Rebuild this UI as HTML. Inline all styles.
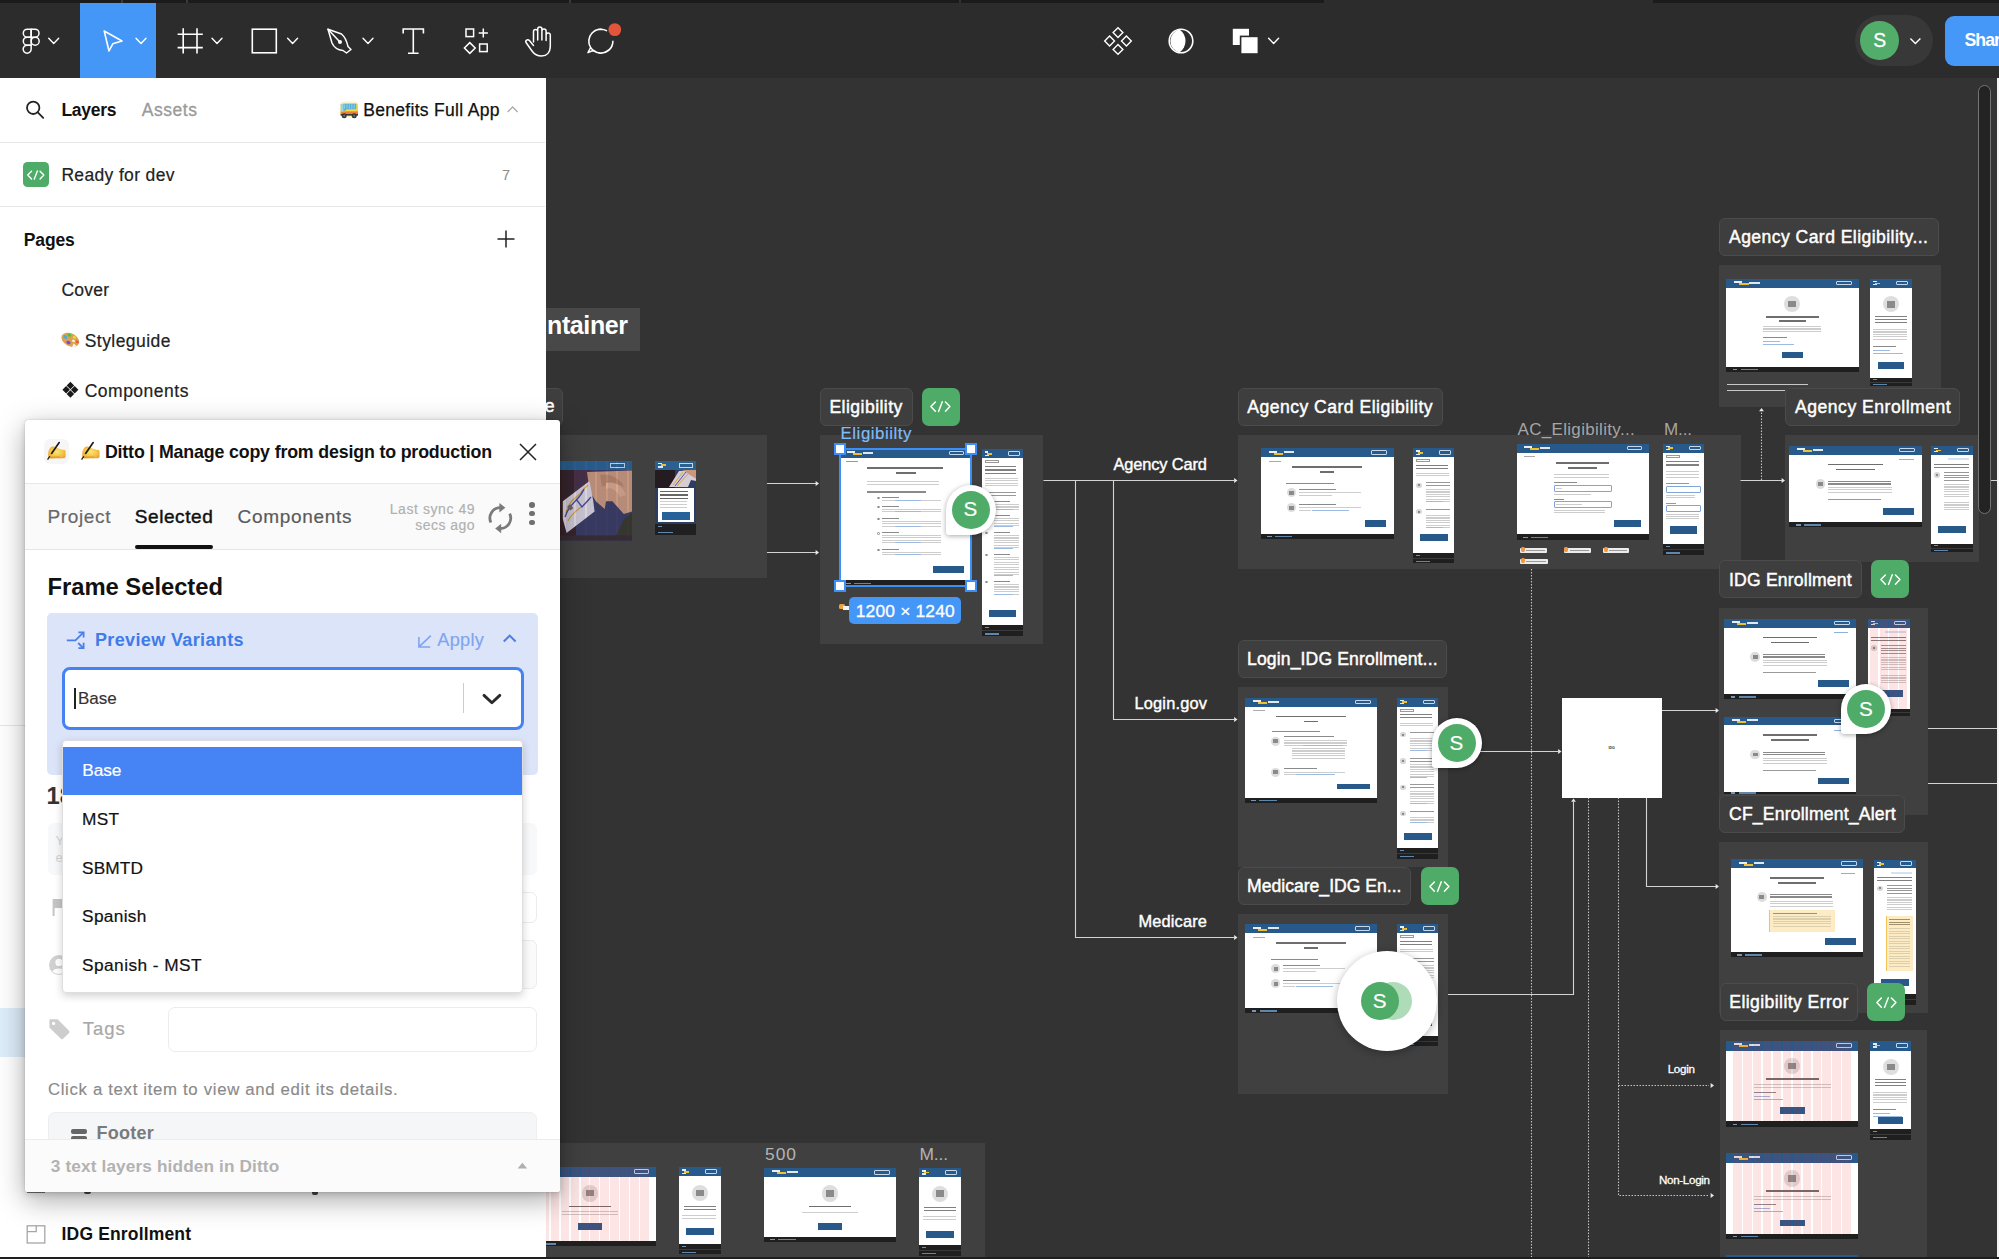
<!DOCTYPE html>
<html><head><meta charset="utf-8"><title>Figma</title><style>

*{box-sizing:border-box;margin:0;padding:0}
html,body{width:1999px;height:1259px;overflow:hidden;background:#333333}
body{font-family:"Liberation Sans",sans-serif;position:relative}
.b{position:absolute}
.t{position:absolute;white-space:nowrap;line-height:1;display:block}
svg{position:absolute;overflow:visible}

.sec{position:absolute;background:#404040}
.lab{position:absolute;height:38px;background:#3e3e3e;border:1px solid #4b4b4b;border-radius:6px}
.gb{position:absolute;width:38px;height:38px;background:#4fab68;border-radius:7px}
.th{position:absolute;background:#fff;overflow:hidden}
.th i{filter:blur(0.3px)}
.th .hd,.th .ft{filter:none}
.th i,.th b,.th u,.th s,.th em{position:absolute;display:block}
.hd{left:0;top:0;width:100%;background:#27598a}
.ft{left:0;bottom:0;width:100%;background:#1f1f1f}
.ln{background:#9a9a9a}
.av{position:absolute;border-radius:50% 50% 50% 3px;background:#fff;box-shadow:0 1px 5px rgba(0,0,0,0.35)}
.avg{position:absolute;border-radius:50%;background:#4fab68}

.lp{position:absolute;left:0;top:78.3px;width:545.6px;height:1181px;background:#fff}

.pg{position:absolute;left:25.2px;top:419.8px;width:534.8px;height:772px;background:#fff;border-radius:3px 3px 2px 2px;box-shadow:0 8px 28px rgba(0,0,0,0.34),0 2px 6px rgba(0,0,0,0.14),0 0 1px rgba(0,0,0,0.35)}
.pgc{position:absolute;left:25.2px;top:419.8px;width:534.8px;height:772px;overflow:hidden;border-radius:3px}

.tb{position:absolute;left:0;top:0;width:1999px;height:78.3px;background:#2c2c2c}
.chev{stroke:#fff;stroke-width:1.4;fill:none}

</style></head><body>
<div class="sec" style="left:540.0px;top:434.5px;width:227.0px;height:143.5px"></div>
<div class="sec" style="left:819.6px;top:434.5px;width:223.8px;height:209.5px"></div>
<div class="sec" style="left:1238.0px;top:434.5px;width:502.5px;height:134.0px"></div>
<div class="sec" style="left:1719.2px;top:265.0px;width:222.0px;height:142.0px"></div>
<div class="sec" style="left:1785.0px;top:434.5px;width:194.0px;height:127.0px"></div>
<div class="sec" style="left:1238.0px;top:686.5px;width:210.0px;height:180.5px"></div>
<div class="sec" style="left:1238.0px;top:913.5px;width:210.0px;height:180.5px"></div>
<div class="sec" style="left:1719.0px;top:608.0px;width:209.0px;height:207.0px"></div>
<div class="sec" style="left:1719.0px;top:842.0px;width:209.0px;height:170.5px"></div>
<div class="sec" style="left:1720.0px;top:1030.0px;width:207.0px;height:229.0px"></div>
<div class="sec" style="left:540.0px;top:1143.0px;width:445.0px;height:116.0px"></div>
<svg width="1999" height="1259" style="left:0;top:0"><g fill="none" stroke="#d4d4d4" stroke-width="1.1"><path d="M767 483.5 H816 M767 552.5 H816"/><path d="M1043.5 480.5 H1234 M1075.5 480.5 V937.5 H1234 M1113.5 480.5 V719.5 H1234"/><path d="M1438 751.5 H1558"/><path d="M1662 710.5 H1716"/><path d="M1448 994.5 H1573.5 V802"/><path d="M1646.5 797.5 V886.5 H1716"/><path d="M1740.5 480.5 H1782"/><path d="M1928 728.5 H1999 M1928 783.5 H1999 M1979 480.5 H1999"/></g><g fill="none" stroke="#c4c4c4" stroke-width="1.1" stroke-dasharray="1.5 1.5"><path d="M1531.5 569 V1259 M1588.5 797.5 V1259 M1618.5 797.5 V1195.5 H1709 M1618.5 1085.5 H1709 M1761.5 480 V412"/></g><path d="M819 483.5 l-3.36 -2.4 v4.8 Z" fill="#e8e8e8" stroke="none"/><path d="M819 552.5 l-3.36 -2.4 v4.8 Z" fill="#e8e8e8" stroke="none"/><path d="M1237.5 480.5 l-3.36 -2.4 v4.8 Z" fill="#e8e8e8" stroke="none"/><path d="M1237.5 937.5 l-3.36 -2.4 v4.8 Z" fill="#e8e8e8" stroke="none"/><path d="M1237.5 719.5 l-3.36 -2.4 v4.8 Z" fill="#e8e8e8" stroke="none"/><path d="M1561.5 751.5 l-3.36 -2.4 v4.8 Z" fill="#e8e8e8" stroke="none"/><path d="M1719 710.5 l-3.36 -2.4 v4.8 Z" fill="#e8e8e8" stroke="none"/><path d="M1573.5 798.5 l-2.4 3.36 h4.8 Z" fill="#e8e8e8" stroke="none"/><path d="M1719 886.5 l-3.36 -2.4 v4.8 Z" fill="#e8e8e8" stroke="none"/><path d="M1785 480.5 l-3.36 -2.4 v4.8 Z" fill="#e8e8e8" stroke="none"/><path d="M1714 1085.5 l-3.36 -2.4 v4.8 Z" fill="#e8e8e8" stroke="none"/><path d="M1714 1195.5 l-3.36 -2.4 v4.8 Z" fill="#e8e8e8" stroke="none"/><path d="M1761.5 408 l-2.4 3.36 h4.8 Z" fill="#e8e8e8" stroke="none"/></svg>
<div class="b" style="left:540.00px;top:308.00px;width:100.40px;height:42.60px;background:#484848;"></div>
<span class="t" style="left:547.00px;top:313px;font-size:25px;color:#fff;font-weight:700;letter-spacing:-0.392px;">ntainer</span>
<div class="lab" style="left:520px;top:387.6px;width:42.6px"></div>
<span class="t" style="left:544.80px;top:398px;font-size:17.6px;color:#fff;-webkit-text-stroke:0.5px #fff;">e</span>
<div class="th" style="left:560px;top:461px;width:72px;height:79.6px;background:#3c3b62"><svg width="72" height="79.6" style="left:0;top:0" viewBox="0 0 72 79.6"><rect x="0" y="9" width="16" height="66" fill="#38242a"/><path d="M14 9 H30 L26 30 L14 44 Z" fill="#4a3046"/><path d="M27 11 L72 9.5 L72 50.5 L63.8 53 L52.4 40.3 L46 40.3 L44.7 48 L35.8 40.3 L29.5 30 L28.2 20 Z" fill="#c9977c"/><path d="M40 14 C48 12 60 16 64 26 C58 22 48 22 42 26 Z" fill="#b88468"/><path d="M46 22 C54 20 62 24 66 34 L60 36 C56 28 50 26 46 28 Z" fill="#d8a88c"/><path d="M2.8 40.3 L29.5 20 L33.3 40.3 L34.6 50.5 L6.6 72 L2.8 58 Z" fill="#dcd4de"/><path d="M6 52 C10 36 20 36 22 30 L28 24" fill="none" stroke="#d9a23a" stroke-width="1.3"/><path d="M8 60 C14 48 22 48 30 38" fill="none" stroke="#d9a23a" stroke-width="1.1"/><path d="M5 56 C10 40 18 42 24 28 M16 38 L22 46 L31 36" fill="none" stroke="#4a4aa0" stroke-width="1.3"/><rect x="8" y="44" width="4" height="5" fill="#7a6a5a" transform="rotate(-35 10 46)"/><path d="M64 58 L72 52 L72 75 L56 75 Z" fill="#3a382c"/><rect x="0" y="0" width="72" height="9" fill="#2b6090"/><rect x="0" y="74.4" width="72" height="5.199999999999989" fill="#3a2c2e"/></svg><i style="left:49.7px;top:2.2px;width:15.1px;height:4.6px;border:0.7px solid #c9d6e4"></i><i style="left:6px;top:0;width:72px;height:79.6px;background:repeating-linear-gradient(to right,rgba(20,40,90,0.1) 0,rgba(20,40,90,0.1) 8.2px,transparent 8.2px,transparent 10.5px)"></i></div>
<div class="th" style="left:655px;top:461px;width:41.4px;height:74px;background:#2b3d62"><svg width="41.4" height="74" style="left:0;top:0" viewBox="0 0 41.4 74"><rect x="0" y="9" width="20" height="18" fill="#241c20"/><path d="M14 26 L24 10 L40 9 L41.4 9 L41.4 20 L36 19 L33 26 Z" fill="#d6ccd4"/><path d="M28 9 H41.4 V18 L35 14 Z" fill="#c9977c"/><path d="M18 24 L28 11 M22 25 L34 12" stroke="#d9a23a" stroke-width="0.9"/><path d="M20 25 L31 11" stroke="#4a4aa0" stroke-width="0.9"/></svg><i class="hd" style="height:9px;background:#2b6090"></i><i style="left:3.4px;top:2.0px;width:3.6px;height:1.4px;background:#e8eef5"></i><i style="left:6.0px;top:3.2px;width:4.6px;height:2.0px;background:#e8c23a"></i><i style="left:3.4px;top:5.4px;width:4.4px;height:1.4px;background:#dfe7f0"></i><i style="left:24.4px;top:2.2px;width:13.4px;height:4.6px;border:0.7px solid #c9d6e4"></i><i style="left:3px;top:26.6px;width:35.8px;height:34px;background:#fff"></i><i style="left:5.4px;top:29.6px;width:27.4px;height:8.1px;background:repeating-linear-gradient(to bottom,#666 0,#666 1.5px,transparent 1.5px,transparent 3.3px)"></i><i style="left:5.4px;top:40.4px;width:26.4px;height:6.6px;background:repeating-linear-gradient(to bottom,#cdcdcd 0,#cdcdcd 1.0px,transparent 1.0px,transparent 2.8px)"></i><i style="left:7.0px;top:51.0px;width:27.8px;height:7.6px;background:#27619a"></i><i style="left:0;bottom:0;width:100%;height:11px;background:#202020"></i><i style="left:3px;bottom:7.6px;width:4px;height:1.1px;background:#6f8fb0"></i><i style="left:3px;bottom:2.2px;width:15px;height:1.1px;background:#5f86ad"></i></div>
<div class="th" style="left:839.6px;top:448.8px;width:131.4px;height:137.6px"><i class="hd" style="height:8.8px"></i><i style="left:7.9px;top:2.2px;width:7.9px;height:2.0px;background:#e8eef5"></i><i style="left:13.1px;top:4.2px;width:9.2px;height:2.0px;background:#f0c030"></i><i style="left:23.0px;top:2.8px;width:10.5px;height:2.0px;background:#dfe7f0"></i><i style="left:109.1px;top:2px;width:15.8px;height:4.4px;border:0.7px solid #c9d6e4;border-radius:1px"></i><i style="left:6.6px;top:12.2px;width:11.8px;height:0.9px;background:#999"></i><i style="left:27.6px;top:18.4px;width:76.2px;height:1.8px;background:#6e6e6e"></i><i style="left:56.5px;top:23.4px;width:19.7px;height:1.8px;background:#6e6e6e"></i><i style="left:27.6px;top:32.2px;width:72.3px;height:3.6px;background:repeating-linear-gradient(to bottom,#cdcdcd 0,#cdcdcd 1.0px,transparent 1.0px,transparent 2.6px)"></i><i style="left:27.6px;top:42.4px;width:59.1px;height:1.4px;background:#8a8a8a"></i><i style="left:37.4px;top:47.8px;width:2.6px;height:2.6px;border:0.6px solid #888;border-radius:50%"></i><i style="left:42.0px;top:48.0px;width:17.1px;height:1.1px;background:#8a8a8a"></i><i style="left:42.0px;top:51.0px;width:59.1px;height:1.0px;background:repeating-linear-gradient(to bottom,#cdcdcd 0,#cdcdcd 1.0px,transparent 1.0px,transparent 2.4px)"></i><i style="left:55.2px;top:51.0px;width:26.3px;height:1.0px;background:#9dbbe2"></i><i style="left:37.4px;top:57.1px;width:2.6px;height:2.6px;border:0.6px solid #888;border-radius:50%"></i><i style="left:42.0px;top:57.3px;width:17.1px;height:1.1px;background:#8a8a8a"></i><i style="left:42.0px;top:60.3px;width:59.1px;height:3.4px;background:repeating-linear-gradient(to bottom,#cdcdcd 0,#cdcdcd 1.0px,transparent 1.0px,transparent 2.4px)"></i><i style="left:55.2px;top:62.7px;width:26.3px;height:1.0px;background:#9dbbe2"></i><i style="left:37.4px;top:68.9px;width:2.6px;height:2.6px;border:0.6px solid #888;border-radius:50%"></i><i style="left:42.0px;top:69.1px;width:17.1px;height:1.1px;background:#8a8a8a"></i><i style="left:42.0px;top:72.1px;width:59.1px;height:5.8px;background:repeating-linear-gradient(to bottom,#cdcdcd 0,#cdcdcd 1.0px,transparent 1.0px,transparent 2.4px)"></i><i style="left:55.2px;top:76.9px;width:26.3px;height:1.0px;background:#9dbbe2"></i><i style="left:37.4px;top:83.2px;width:2.6px;height:2.6px;border:0.6px solid #888;border-radius:50%"></i><i style="left:42.0px;top:83.4px;width:17.1px;height:1.1px;background:#8a8a8a"></i><i style="left:42.0px;top:86.4px;width:59.1px;height:8.2px;background:repeating-linear-gradient(to bottom,#cdcdcd 0,#cdcdcd 1.0px,transparent 1.0px,transparent 2.4px)"></i><i style="left:55.2px;top:93.6px;width:26.3px;height:1.0px;background:#9dbbe2"></i><i style="left:37.4px;top:100.0px;width:2.6px;height:2.6px;border:0.6px solid #888;border-radius:50%"></i><i style="left:42.0px;top:100.2px;width:17.1px;height:1.1px;background:#8a8a8a"></i><i style="left:42.0px;top:103.2px;width:59.1px;height:3.4px;background:repeating-linear-gradient(to bottom,#cdcdcd 0,#cdcdcd 1.0px,transparent 1.0px,transparent 2.4px)"></i><i style="left:55.2px;top:105.6px;width:26.3px;height:1.0px;background:#9dbbe2"></i><i style="left:93.0px;top:117.6px;width:31.3px;height:6.6px;background:#27598a"></i><i class="ft" style="height:6.4px"></i><i style="left:6.6px;bottom:2.6px;width:4.6px;height:1.1px;background:#7c96b0"></i><i style="left:14.5px;bottom:2.6px;width:17.1px;height:1.1px;background:#5f86ad"></i></div>
<div class="th" style="left:981.8px;top:449.4px;width:41.4px;height:187.0px"><i class="hd" style="height:8.8px"></i><i style="left:3.0px;top:2.0px;width:3.6px;height:1.4px;background:#e8eef5"></i><i style="left:5.0px;top:3.6px;width:5.0px;height:1.6px;background:#f0c030"></i><i style="left:3.0px;top:5.2px;width:4.0px;height:1.2px;background:#dfe7f0"></i><i style="left:25.9px;top:1.8px;width:12px;height:4.6px;border:0.7px solid #c9d6e4;border-radius:1px"></i><i style="left:3px;top:10.8px;width:14px;height:3px;border:0.6px solid #999"></i><i style="left:3.0px;top:16.4px;width:31.4px;height:8.2px;background:repeating-linear-gradient(to bottom,#808080 0,#808080 1.4px,transparent 1.4px,transparent 3.4px)"></i><i style="left:3.0px;top:28.8px;width:33.4px;height:8.5px;background:repeating-linear-gradient(to bottom,#cdcdcd 0,#cdcdcd 1.0px,transparent 1.0px,transparent 2.5px)"></i><i style="left:3.0px;top:42.4px;width:31.4px;height:4.2px;background:repeating-linear-gradient(to bottom,#989898 0,#989898 1.2px,transparent 1.2px,transparent 3px)"></i><i style="left:3.4px;top:50.8px;width:2.6px;height:2.6px;border:0.6px solid #888;border-radius:50%"></i><i style="left:12.0px;top:51.2px;width:16.6px;height:1.2px;background:#8a8a8a"></i><i style="left:12.0px;top:54.2px;width:25.4px;height:6.0px;background:repeating-linear-gradient(to bottom,#cdcdcd 0,#cdcdcd 1.0px,transparent 1.0px,transparent 2.5px)"></i><i style="left:12.0px;top:59.2px;width:19.4px;height:1.0px;background:#9dbbe2"></i><i style="left:3.4px;top:65.3px;width:2.6px;height:2.6px;border:0.6px solid #888;border-radius:50%"></i><i style="left:12.0px;top:65.7px;width:16.6px;height:1.2px;background:#8a8a8a"></i><i style="left:12.0px;top:68.7px;width:25.4px;height:8.5px;background:repeating-linear-gradient(to bottom,#cdcdcd 0,#cdcdcd 1.0px,transparent 1.0px,transparent 2.5px)"></i><i style="left:12.0px;top:76.2px;width:19.4px;height:1.0px;background:#9dbbe2"></i><i style="left:3.4px;top:82.3px;width:2.6px;height:2.6px;border:0.6px solid #888;border-radius:50%"></i><i style="left:12.0px;top:82.7px;width:16.6px;height:1.2px;background:#8a8a8a"></i><i style="left:12.0px;top:85.7px;width:25.4px;height:13.5px;background:repeating-linear-gradient(to bottom,#cdcdcd 0,#cdcdcd 1.0px,transparent 1.0px,transparent 2.5px)"></i><i style="left:12.0px;top:98.2px;width:19.4px;height:1.0px;background:#9dbbe2"></i><i style="left:3.4px;top:104.3px;width:2.6px;height:2.6px;border:0.6px solid #888;border-radius:50%"></i><i style="left:12.0px;top:104.7px;width:16.6px;height:1.2px;background:#8a8a8a"></i><i style="left:12.0px;top:107.7px;width:25.4px;height:18.5px;background:repeating-linear-gradient(to bottom,#cdcdcd 0,#cdcdcd 1.0px,transparent 1.0px,transparent 2.5px)"></i><i style="left:12.0px;top:125.2px;width:19.4px;height:1.0px;background:#9dbbe2"></i><i style="left:3.4px;top:131.3px;width:2.6px;height:2.6px;border:0.6px solid #888;border-radius:50%"></i><i style="left:12.0px;top:131.7px;width:16.6px;height:1.2px;background:#8a8a8a"></i><i style="left:12.0px;top:134.7px;width:25.4px;height:11.0px;background:repeating-linear-gradient(to bottom,#cdcdcd 0,#cdcdcd 1.0px,transparent 1.0px,transparent 2.5px)"></i><i style="left:12.0px;top:144.7px;width:19.4px;height:1.0px;background:#9dbbe2"></i><i style="left:7.0px;top:160.6px;width:27.4px;height:7.0px;background:#27598a"></i><i class="ft" style="height:11.4px;background:#3a3a3a"></i><i style="left:0;bottom:6.4px;width:100%;height:5.0px;background:#1f1f1f"></i><i style="left:0;bottom:0;width:100%;height:5.0px;background:#1f1f1f"></i><i style="left:3px;bottom:8.3px;width:4px;height:1.1px;background:#6f8fb0"></i><i style="left:3px;bottom:1.9px;width:14px;height:1.1px;background:#5f86ad"></i></div>
<div class="th" style="left:1260.5px;top:448.4px;width:133.0px;height:90.4px"><i class="hd" style="height:8.8px"></i><i style="left:8.0px;top:2.2px;width:8.0px;height:2.0px;background:#e8eef5"></i><i style="left:13.3px;top:4.2px;width:9.3px;height:2.0px;background:#f0c030"></i><i style="left:23.3px;top:2.8px;width:10.6px;height:2.0px;background:#dfe7f0"></i><i style="left:110.4px;top:2px;width:16.0px;height:4.4px;border:0.7px solid #c9d6e4;border-radius:1px"></i><i style="left:8.0px;top:12.2px;width:12.0px;height:0.9px;background:#aaa"></i><i style="left:31.5px;top:18.0px;width:70.0px;height:1.7px;background:#6e6e6e"></i><i style="left:59.3px;top:22.8px;width:14.0px;height:1.7px;background:#6e6e6e"></i><i style="left:25.7px;top:34.4px;width:47.5px;height:1.2px;background:#8a8a8a"></i><i style="left:26.4px;top:39.8px;width:9.2px;height:9.2px;border-radius:50%;background:#dcdcdc"></i><i style="left:28.7px;top:42.6px;width:4.6px;height:3.7px;background:#8a8a8a"></i><i style="left:38.3px;top:40.4px;width:37.2px;height:1.2px;background:#8a8a8a"></i><i style="left:38.3px;top:44.0px;width:62.5px;height:1.0px;background:#cdcdcd"></i><i style="left:38.3px;top:47.0px;width:33.2px;height:1.0px;background:#cdcdcd"></i><i style="left:26.4px;top:54.8px;width:9.2px;height:9.2px;border-radius:50%;background:#dcdcdc"></i><i style="left:28.7px;top:57.6px;width:4.6px;height:3.7px;background:#8a8a8a"></i><i style="left:38.3px;top:55.4px;width:37.2px;height:1.2px;background:#8a8a8a"></i><i style="left:38.3px;top:59.0px;width:62.5px;height:1.0px;background:#cdcdcd"></i><i style="left:38.3px;top:62.0px;width:12.0px;height:1.0px;background:#cdcdcd"></i><i style="left:51.2px;top:62.0px;width:37.2px;height:1.0px;background:#9dbbe2"></i><i style="left:104.5px;top:71.2px;width:21.0px;height:7.0px;background:#27598a"></i><i class="ft" style="height:5px"></i><i style="left:6.7px;bottom:1.9px;width:4.7px;height:1.1px;background:#7c96b0"></i><i style="left:14.6px;bottom:1.9px;width:17.3px;height:1.1px;background:#5f86ad"></i></div>
<div class="th" style="left:1413.0px;top:448.4px;width:41.4px;height:115.0px"><i class="hd" style="height:8.8px"></i><i style="left:3.0px;top:2.0px;width:3.6px;height:1.4px;background:#e8eef5"></i><i style="left:5.0px;top:3.6px;width:5.0px;height:1.6px;background:#f0c030"></i><i style="left:3.0px;top:5.2px;width:4.0px;height:1.2px;background:#dfe7f0"></i><i style="left:25.9px;top:1.8px;width:12px;height:4.6px;border:0.7px solid #c9d6e4;border-radius:1px"></i><i style="left:3px;top:10.8px;width:14px;height:3px;border:0.6px solid #999"></i><i style="left:3.0px;top:16.4px;width:32.4px;height:4.5px;background:repeating-linear-gradient(to bottom,#808080 0,#808080 1.3px,transparent 1.3px,transparent 3.2px)"></i><i style="left:3.0px;top:24.8px;width:33.4px;height:3.4px;background:repeating-linear-gradient(to bottom,#cdcdcd 0,#cdcdcd 1.0px,transparent 1.0px,transparent 2.4px)"></i><i style="left:3.4px;top:34.2px;width:5.2px;height:5.2px;border-radius:50%;background:#d8d8d8"></i><i style="left:4.7px;top:35.8px;width:2.6px;height:2.1px;background:#8a8a8a"></i><i style="left:12.5px;top:33.8px;width:24.4px;height:3.7px;background:repeating-linear-gradient(to bottom,#989898 0,#989898 1.1px,transparent 1.1px,transparent 2.6px)"></i><i style="left:12.5px;top:40.2px;width:24.4px;height:13.5px;background:repeating-linear-gradient(to bottom,#cdcdcd 0,#cdcdcd 1.0px,transparent 1.0px,transparent 2.5px)"></i><i style="left:12.5px;top:52.7px;width:17.4px;height:1.0px;background:#9dbbe2"></i><i style="left:3.4px;top:60.6px;width:5.2px;height:5.2px;border-radius:50%;background:#d8d8d8"></i><i style="left:4.7px;top:62.2px;width:2.6px;height:2.1px;background:#8a8a8a"></i><i style="left:12.5px;top:60.2px;width:24.4px;height:3.7px;background:repeating-linear-gradient(to bottom,#989898 0,#989898 1.1px,transparent 1.1px,transparent 2.6px)"></i><i style="left:12.5px;top:66.6px;width:24.4px;height:13.5px;background:repeating-linear-gradient(to bottom,#cdcdcd 0,#cdcdcd 1.0px,transparent 1.0px,transparent 2.5px)"></i><i style="left:12.5px;top:79.1px;width:17.4px;height:1.0px;background:#9dbbe2"></i><i style="left:6.5px;top:86.0px;width:28.4px;height:7.0px;background:#27598a"></i><i class="ft" style="height:10.4px;background:#3a3a3a"></i><i style="left:0;bottom:5.8px;width:100%;height:4.6px;background:#1f1f1f"></i><i style="left:0;bottom:0;width:100%;height:4.6px;background:#1f1f1f"></i><i style="left:3px;bottom:7.5px;width:4px;height:1.1px;background:#6f8fb0"></i><i style="left:3px;bottom:1.7px;width:14px;height:1.1px;background:#5f86ad"></i></div>
<div class="th" style="left:1516.5px;top:443.8px;width:132.5px;height:96.1px"><i class="hd" style="height:9px"></i><i style="left:7.9px;top:2.2px;width:7.9px;height:2.0px;background:#e8eef5"></i><i style="left:13.2px;top:4.2px;width:9.3px;height:2.0px;background:#f0c030"></i><i style="left:23.2px;top:2.8px;width:10.6px;height:2.0px;background:#dfe7f0"></i><i style="left:110.0px;top:2px;width:15.9px;height:4.4px;border:0.7px solid #c9d6e4;border-radius:1px"></i><i style="left:7.9px;top:12.4px;width:10.6px;height:0.9px;background:#aaa"></i><i style="left:39.1px;top:18.2px;width:53.7px;height:1.7px;background:#6e6e6e"></i><i style="left:51.9px;top:23.7px;width:28.4px;height:1.7px;background:#6e6e6e"></i><i style="left:37.8px;top:30.6px;width:54.3px;height:3.9px;background:repeating-linear-gradient(to bottom,#cdcdcd 0,#cdcdcd 1.0px,transparent 1.0px,transparent 2.9px)"></i><i style="left:37.8px;top:38.7px;width:22.5px;height:1.0px;background:#8a8a8a"></i><i style="left:37.0px;top:41.7px;width:58.4px;height:6.3px;border:0.9px solid #7fa6d6;border-radius:1px"></i><i style="left:39.1px;top:44.4px;width:6.6px;height:0.9px;background:#cdcdcd"></i><i style="left:37.8px;top:50.2px;width:37.1px;height:0.9px;background:#cdcdcd"></i><i style="left:37.8px;top:54.9px;width:9.3px;height:1.0px;background:#8a8a8a"></i><i style="left:37.0px;top:57.6px;width:58.4px;height:6.7px;border:0.9px solid #7fa6d6;border-radius:1px"></i><i style="left:39.1px;top:60.5px;width:26.5px;height:0.9px;background:#cdcdcd"></i><i style="left:37.8px;top:66.2px;width:50.4px;height:2.6px;background:repeating-linear-gradient(to bottom,#cdcdcd 0,#cdcdcd 0.8px,transparent 0.8px,transparent 1.8px)"></i><i style="left:97.9px;top:76.6px;width:26.9px;height:6.8px;background:#27598a"></i><i class="ft" style="height:5.5px"></i><i style="left:6.6px;bottom:2.1px;width:4.6px;height:1.1px;background:#7c96b0"></i><i style="left:14.6px;bottom:2.1px;width:17.2px;height:1.1px;background:#5f86ad"></i></div>
<div class="th" style="left:1663.1px;top:443.8px;width:41.2px;height:111.6px"><i class="hd" style="height:9px"></i><i style="left:3.0px;top:2.0px;width:3.6px;height:1.4px;background:#e8eef5"></i><i style="left:5.0px;top:3.6px;width:5.0px;height:1.6px;background:#f0c030"></i><i style="left:3.0px;top:5.2px;width:4.0px;height:1.2px;background:#dfe7f0"></i><i style="left:25.7px;top:1.8px;width:12px;height:4.6px;border:0.7px solid #c9d6e4;border-radius:1px"></i><i style="left:3px;top:11.0px;width:14px;height:3px;border:0.6px solid #999"></i><i style="left:3.0px;top:17.6px;width:33.2px;height:4.7px;background:repeating-linear-gradient(to bottom,#808080 0,#808080 1.3px,transparent 1.3px,transparent 3.4px)"></i><i style="left:3.0px;top:27.5px;width:33.2px;height:6.8px;background:repeating-linear-gradient(to bottom,#cdcdcd 0,#cdcdcd 1.0px,transparent 1.0px,transparent 2.9px)"></i><i style="left:3.0px;top:39.6px;width:22.7px;height:1.0px;background:#989898"></i><i style="left:2.8px;top:42.6px;width:35.6px;height:6.8px;border:0.9px solid #7fa6d6;border-radius:1px"></i><i style="left:3.0px;top:51.4px;width:29.2px;height:3.0px;background:repeating-linear-gradient(to bottom,#cdcdcd 0,#cdcdcd 0.9px,transparent 0.9px,transparent 2.1px)"></i><i style="left:3.0px;top:59.0px;width:10.3px;height:1.0px;background:#989898"></i><i style="left:2.8px;top:61.2px;width:35.6px;height:6.6px;border:0.9px solid #7fa6d6;border-radius:1px"></i><i style="left:3.0px;top:70.4px;width:33.2px;height:4.7px;background:repeating-linear-gradient(to bottom,#cdcdcd 0,#cdcdcd 0.9px,transparent 0.9px,transparent 1.9px)"></i><i style="left:6.9px;top:82.7px;width:27.4px;height:7.9px;background:#27598a"></i><i class="ft" style="height:11.5px;background:#3a3a3a"></i><i style="left:0;bottom:6.4px;width:100%;height:5.1px;background:#1f1f1f"></i><i style="left:0;bottom:0;width:100%;height:5.1px;background:#1f1f1f"></i><i style="left:3px;bottom:8.4px;width:4px;height:1.1px;background:#6f8fb0"></i><i style="left:3px;bottom:1.9px;width:14px;height:1.1px;background:#5f86ad"></i></div>
<div class="b" style="left:1520.00px;top:548.20px;width:27.00px;height:5.00px;background:#ececec;border-radius:1px;"></div>
<div class="b" style="left:1520.80px;top:547.40px;width:3.80px;height:5.00px;background:#f09a3c;border-radius:40%;"></div>
<div class="b" style="left:1526.00px;top:550.10px;width:19.00px;height:1.20px;background:#9a9a9a;"></div>
<div class="b" style="left:1563.60px;top:548.20px;width:27.30px;height:5.00px;background:#ececec;border-radius:1px;"></div>
<div class="b" style="left:1564.40px;top:547.40px;width:3.80px;height:5.00px;background:#f09a3c;border-radius:40%;"></div>
<div class="b" style="left:1569.60px;top:550.10px;width:19.30px;height:1.20px;background:#9a9a9a;"></div>
<div class="b" style="left:1603.20px;top:548.20px;width:25.40px;height:5.00px;background:#ececec;border-radius:1px;"></div>
<div class="b" style="left:1604.00px;top:547.40px;width:3.80px;height:5.00px;background:#f09a3c;border-radius:40%;"></div>
<div class="b" style="left:1609.20px;top:550.10px;width:17.40px;height:1.20px;background:#9a9a9a;"></div>
<div class="b" style="left:1520.00px;top:559.00px;width:28.00px;height:5.00px;background:#ececec;border-radius:1px;"></div>
<div class="b" style="left:1520.80px;top:558.20px;width:3.80px;height:5.00px;background:#f09a3c;border-radius:40%;"></div>
<div class="b" style="left:1526.00px;top:560.90px;width:20.00px;height:1.20px;background:#9a9a9a;"></div>
<div class="th" style="left:1726.0px;top:279.0px;width:132.6px;height:92.6px"><i class="hd" style="height:8.8px"></i><i style="left:8.0px;top:2.2px;width:8.0px;height:2.0px;background:#e8eef5"></i><i style="left:13.3px;top:4.2px;width:9.3px;height:2.0px;background:#f0c030"></i><i style="left:23.2px;top:2.8px;width:10.6px;height:2.0px;background:#dfe7f0"></i><i style="left:110.1px;top:2px;width:15.9px;height:4.4px;border:0.7px solid #c9d6e4;border-radius:1px"></i><i style="left:58.1px;top:17.0px;width:16.4px;height:16.4px;border-radius:50%;background:#dedede"></i><i style="left:62.2px;top:21.9px;width:8.2px;height:6.6px;background:#8a8a8a"></i><i style="left:39.8px;top:37.2px;width:53.0px;height:1.5px;background:#6e6e6e"></i><i style="left:53.0px;top:41.2px;width:26.5px;height:1.5px;background:#6e6e6e"></i><i style="left:37.1px;top:47.2px;width:58.3px;height:6.0px;background:repeating-linear-gradient(to bottom,#cdcdcd 0,#cdcdcd 1.0px,transparent 1.0px,transparent 2.5px)"></i><i style="left:37.1px;top:58.2px;width:23.9px;height:1.1px;background:#8a8a8a"></i><i style="left:37.1px;top:61.6px;width:17.2px;height:1.1px;background:#9dbbe2"></i><i style="left:37.1px;top:64.8px;width:30.5px;height:1.1px;background:#9dbbe2"></i><i style="left:55.7px;top:73.2px;width:21.2px;height:6.2px;background:#27598a"></i><i class="ft" style="height:5px"></i><i style="left:6.6px;bottom:1.9px;width:4.6px;height:1.1px;background:#7c96b0"></i><i style="left:14.6px;bottom:1.9px;width:17.2px;height:1.1px;background:#5f86ad"></i></div>
<div class="th" style="left:1870.0px;top:279.0px;width:41.8px;height:107.4px"><i class="hd" style="height:8.8px"></i><i style="left:3.0px;top:2.0px;width:3.6px;height:1.4px;background:#e8eef5"></i><i style="left:5.0px;top:3.6px;width:5.0px;height:1.6px;background:#f0c030"></i><i style="left:3.0px;top:5.2px;width:4.0px;height:1.2px;background:#dfe7f0"></i><i style="left:26.3px;top:1.8px;width:12px;height:4.6px;border:0.7px solid #c9d6e4;border-radius:1px"></i><i style="left:12.9px;top:17.4px;width:16.0px;height:16.0px;border-radius:50%;background:#dedede"></i><i style="left:16.9px;top:22.2px;width:8.0px;height:6.4px;background:#8a8a8a"></i><i style="left:5.0px;top:37.0px;width:31.8px;height:7.5px;background:repeating-linear-gradient(to bottom,#808080 0,#808080 1.3px,transparent 1.3px,transparent 3.1px)"></i><i style="left:3.4px;top:50.4px;width:33.8px;height:11.0px;background:repeating-linear-gradient(to bottom,#cdcdcd 0,#cdcdcd 1.0px,transparent 1.0px,transparent 2.5px)"></i><i style="left:3.4px;top:67.4px;width:23.0px;height:1.1px;background:#8a8a8a"></i><i style="left:3.4px;top:70.8px;width:16.7px;height:1.1px;background:#9dbbe2"></i><i style="left:3.4px;top:74.2px;width:29.3px;height:1.1px;background:#9dbbe2"></i><i style="left:8.0px;top:82.6px;width:25.8px;height:7.0px;background:#27598a"></i><i class="ft" style="height:8.6px;background:#3a3a3a"></i><i style="left:0;bottom:4.8px;width:100%;height:3.8px;background:#1f1f1f"></i><i style="left:0;bottom:0;width:100%;height:3.8px;background:#1f1f1f"></i><i style="left:3px;bottom:6.1px;width:4px;height:1.1px;background:#6f8fb0"></i><i style="left:3px;bottom:1.3px;width:14px;height:1.1px;background:#5f86ad"></i></div>
<div class="b" style="left:1727.40px;top:383.60px;width:81.00px;height:1.60px;background:#c8c8c8;"></div>
<div class="b" style="left:1727.40px;top:389.60px;width:58.00px;height:1.60px;background:#c8c8c8;"></div>
<div class="th" style="left:1789.4px;top:446.0px;width:132.6px;height:81.4px"><i class="hd" style="height:8.8px"></i><i style="left:8.0px;top:2.2px;width:8.0px;height:2.0px;background:#e8eef5"></i><i style="left:13.3px;top:4.2px;width:9.3px;height:2.0px;background:#f0c030"></i><i style="left:23.2px;top:2.8px;width:10.6px;height:2.0px;background:#dfe7f0"></i><i style="left:110.1px;top:2px;width:15.9px;height:4.4px;border:0.7px solid #c9d6e4;border-radius:1px"></i><i style="left:110.1px;top:13.2px;width:14.6px;height:0.9px;background:#8fb0dd"></i><i style="left:39.1px;top:17.8px;width:54.4px;height:1.7px;background:#6e6e6e"></i><i style="left:47.1px;top:22.8px;width:38.5px;height:1.7px;background:#6e6e6e"></i><i style="left:26.3px;top:33.1px;width:9.8px;height:9.8px;border-radius:50%;background:#dcdcdc"></i><i style="left:28.7px;top:36.0px;width:4.9px;height:3.9px;background:#8a8a8a"></i><i style="left:39.1px;top:35.0px;width:62.3px;height:3.6px;background:repeating-linear-gradient(to bottom,#8a8a8a 0,#8a8a8a 1.2px,transparent 1.2px,transparent 2.4px)"></i><i style="left:39.1px;top:41.4px;width:63.6px;height:5.8px;background:repeating-linear-gradient(to bottom,#cdcdcd 0,#cdcdcd 1.0px,transparent 1.0px,transparent 2.4px)"></i><i style="left:39.1px;top:53.2px;width:53.0px;height:1.0px;background:#999"></i><i style="left:94.0px;top:62.4px;width:30.9px;height:6.7px;background:#27598a"></i><i class="ft" style="height:5px"></i><i style="left:6.6px;bottom:1.9px;width:4.6px;height:1.1px;background:#7c96b0"></i><i style="left:14.6px;bottom:1.9px;width:17.2px;height:1.1px;background:#5f86ad"></i></div>
<div class="th" style="left:1931.0px;top:446.0px;width:41.8px;height:106.4px"><i class="hd" style="height:8.8px"></i><i style="left:3.0px;top:2.0px;width:3.6px;height:1.4px;background:#e8eef5"></i><i style="left:5.0px;top:3.6px;width:5.0px;height:1.6px;background:#f0c030"></i><i style="left:3.0px;top:5.2px;width:4.0px;height:1.2px;background:#dfe7f0"></i><i style="left:26.3px;top:1.8px;width:12px;height:4.6px;border:0.7px solid #c9d6e4;border-radius:1px"></i><i style="left:16.7px;top:12.0px;width:21.7px;height:2.4px;background:#d5e2f2"></i><i style="left:3.0px;top:17.8px;width:34.8px;height:4.5px;background:repeating-linear-gradient(to bottom,#808080 0,#808080 1.3px,transparent 1.3px,transparent 3.2px)"></i><i style="left:3.2px;top:26.0px;width:5.6px;height:5.6px;border-radius:50%;background:#d8d8d8"></i><i style="left:4.6px;top:27.7px;width:2.8px;height:2.2px;background:#8a8a8a"></i><i style="left:12.5px;top:25.8px;width:25.8px;height:8.9px;background:repeating-linear-gradient(to bottom,#989898 0,#989898 1.1px,transparent 1.1px,transparent 2.6px)"></i><i style="left:12.5px;top:37.8px;width:25.8px;height:13.5px;background:repeating-linear-gradient(to bottom,#cdcdcd 0,#cdcdcd 1.0px,transparent 1.0px,transparent 2.5px)"></i><i style="left:12.5px;top:55.8px;width:25.8px;height:8.5px;background:repeating-linear-gradient(to bottom,#cdcdcd 0,#cdcdcd 1.0px,transparent 1.0px,transparent 2.5px)"></i><i style="left:7.0px;top:80.0px;width:27.8px;height:7.0px;background:#27598a"></i><i class="ft" style="height:8.6px;background:#3a3a3a"></i><i style="left:0;bottom:4.8px;width:100%;height:3.8px;background:#1f1f1f"></i><i style="left:0;bottom:0;width:100%;height:3.8px;background:#1f1f1f"></i><i style="left:3px;bottom:6.1px;width:4px;height:1.1px;background:#6f8fb0"></i><i style="left:3px;bottom:1.3px;width:14px;height:1.1px;background:#5f86ad"></i></div>
<div class="th" style="left:1244.8px;top:697.8px;width:132.4px;height:104.8px"><i class="hd" style="height:8.8px"></i><i style="left:7.9px;top:2.2px;width:7.9px;height:2.0px;background:#e8eef5"></i><i style="left:13.2px;top:4.2px;width:9.3px;height:2.0px;background:#f0c030"></i><i style="left:23.2px;top:2.8px;width:10.6px;height:2.0px;background:#dfe7f0"></i><i style="left:109.9px;top:2px;width:15.9px;height:4.4px;border:0.7px solid #c9d6e4;border-radius:1px"></i><i style="left:7.9px;top:12.2px;width:11.9px;height:0.9px;background:#aaa"></i><i style="left:31.4px;top:18.0px;width:69.6px;height:1.7px;background:#6e6e6e"></i><i style="left:59.1px;top:22.8px;width:13.9px;height:1.7px;background:#6e6e6e"></i><i style="left:27.1px;top:32.8px;width:47.7px;height:1.2px;background:#8a8a8a"></i><i style="left:26.4px;top:39.0px;width:8.8px;height:8.8px;border-radius:50%;background:#dcdcdc"></i><i style="left:28.6px;top:41.6px;width:4.4px;height:3.5px;background:#8a8a8a"></i><i style="left:39.1px;top:38.4px;width:50.3px;height:1.2px;background:#8a8a8a"></i><i style="left:39.1px;top:41.8px;width:63.6px;height:6.0px;background:repeating-linear-gradient(to bottom,#cdcdcd 0,#cdcdcd 1.0px,transparent 1.0px,transparent 2.5px)"></i><i style="left:58.3px;top:46.8px;width:39.7px;height:1.0px;background:#9dbbe2"></i><i style="left:47.7px;top:49.8px;width:53.0px;height:11.0px;background:repeating-linear-gradient(to bottom,#cdcdcd 0,#cdcdcd 1.0px,transparent 1.0px,transparent 2.5px)"></i><i style="left:26.4px;top:70.0px;width:8.8px;height:8.8px;border-radius:50%;background:#dcdcdc"></i><i style="left:28.6px;top:72.6px;width:4.4px;height:3.5px;background:#8a8a8a"></i><i style="left:39.1px;top:70.4px;width:33.1px;height:1.2px;background:#8a8a8a"></i><i style="left:39.1px;top:73.8px;width:60.9px;height:1.0px;background:#cdcdcd"></i><i style="left:39.1px;top:76.4px;width:11.9px;height:1.0px;background:#cdcdcd"></i><i style="left:51.6px;top:76.4px;width:38.4px;height:1.0px;background:#9dbbe2"></i><i style="left:92.7px;top:86.7px;width:32.3px;height:4.8px;background:#27598a"></i><i class="ft" style="height:5.1px"></i><i style="left:6.6px;bottom:1.9px;width:4.6px;height:1.1px;background:#7c96b0"></i><i style="left:14.6px;bottom:1.9px;width:17.2px;height:1.1px;background:#5f86ad"></i></div>
<div class="th" style="left:1397.1px;top:697.8px;width:41.4px;height:161.4px"><i class="hd" style="height:8.8px"></i><i style="left:3.0px;top:2.0px;width:3.6px;height:1.4px;background:#e8eef5"></i><i style="left:5.0px;top:3.6px;width:5.0px;height:1.6px;background:#f0c030"></i><i style="left:3.0px;top:5.2px;width:4.0px;height:1.2px;background:#dfe7f0"></i><i style="left:25.9px;top:1.8px;width:12px;height:4.6px;border:0.7px solid #c9d6e4;border-radius:1px"></i><i style="left:3px;top:10.8px;width:14px;height:3px;border:0.6px solid #999"></i><i style="left:3.0px;top:16.4px;width:32.4px;height:4.5px;background:repeating-linear-gradient(to bottom,#808080 0,#808080 1.3px,transparent 1.3px,transparent 3.2px)"></i><i style="left:3.0px;top:24.8px;width:33.4px;height:3.4px;background:repeating-linear-gradient(to bottom,#cdcdcd 0,#cdcdcd 1.0px,transparent 1.0px,transparent 2.4px)"></i><i style="left:3.4px;top:34.2px;width:5.2px;height:5.2px;border-radius:50%;background:#d8d8d8"></i><i style="left:4.7px;top:35.8px;width:2.6px;height:2.1px;background:#8a8a8a"></i><i style="left:12.5px;top:33.8px;width:24.4px;height:3.7px;background:repeating-linear-gradient(to bottom,#989898 0,#989898 1.1px,transparent 1.1px,transparent 2.6px)"></i><i style="left:12.5px;top:40.2px;width:24.4px;height:13.5px;background:repeating-linear-gradient(to bottom,#cdcdcd 0,#cdcdcd 1.0px,transparent 1.0px,transparent 2.5px)"></i><i style="left:12.5px;top:52.7px;width:17.4px;height:1.0px;background:#9dbbe2"></i><i style="left:3.4px;top:60.6px;width:5.2px;height:5.2px;border-radius:50%;background:#d8d8d8"></i><i style="left:4.7px;top:62.2px;width:2.6px;height:2.1px;background:#8a8a8a"></i><i style="left:12.5px;top:60.2px;width:24.4px;height:3.7px;background:repeating-linear-gradient(to bottom,#989898 0,#989898 1.1px,transparent 1.1px,transparent 2.6px)"></i><i style="left:12.5px;top:66.6px;width:24.4px;height:13.5px;background:repeating-linear-gradient(to bottom,#cdcdcd 0,#cdcdcd 1.0px,transparent 1.0px,transparent 2.5px)"></i><i style="left:12.5px;top:79.1px;width:17.4px;height:1.0px;background:#9dbbe2"></i><i style="left:3.4px;top:87.0px;width:5.2px;height:5.2px;border-radius:50%;background:#d8d8d8"></i><i style="left:4.7px;top:88.6px;width:2.6px;height:2.1px;background:#8a8a8a"></i><i style="left:12.5px;top:86.6px;width:24.4px;height:3.7px;background:repeating-linear-gradient(to bottom,#989898 0,#989898 1.1px,transparent 1.1px,transparent 2.6px)"></i><i style="left:12.5px;top:93.0px;width:24.4px;height:13.5px;background:repeating-linear-gradient(to bottom,#cdcdcd 0,#cdcdcd 1.0px,transparent 1.0px,transparent 2.5px)"></i><i style="left:12.5px;top:105.5px;width:17.4px;height:1.0px;background:#9dbbe2"></i><i style="left:3.4px;top:113.4px;width:5.2px;height:5.2px;border-radius:50%;background:#d8d8d8"></i><i style="left:4.7px;top:115.0px;width:2.6px;height:2.1px;background:#8a8a8a"></i><i style="left:12.5px;top:113.0px;width:24.4px;height:3.7px;background:repeating-linear-gradient(to bottom,#989898 0,#989898 1.1px,transparent 1.1px,transparent 2.6px)"></i><i style="left:12.5px;top:119.4px;width:24.4px;height:6.0px;background:repeating-linear-gradient(to bottom,#cdcdcd 0,#cdcdcd 1.0px,transparent 1.0px,transparent 2.5px)"></i><i style="left:12.5px;top:124.4px;width:17.4px;height:1.0px;background:#9dbbe2"></i><i style="left:6.5px;top:135.2px;width:28.4px;height:7.0px;background:#27598a"></i><i class="ft" style="height:11.3px;background:#3a3a3a"></i><i style="left:0;bottom:6.3px;width:100%;height:5.0px;background:#1f1f1f"></i><i style="left:0;bottom:0;width:100%;height:5.0px;background:#1f1f1f"></i><i style="left:3px;bottom:8.2px;width:4px;height:1.1px;background:#6f8fb0"></i><i style="left:3px;bottom:1.9px;width:14px;height:1.1px;background:#5f86ad"></i></div>
<div class="b" style="left:1562.20px;top:698.00px;width:99.60px;height:99.60px;background:#fff;"></div>
<span class="t" style="left:1608.40px;top:747px;font-size:3.6px;color:#333;font-weight:700;">IDG</span>
<div class="th" style="left:1245.0px;top:924.4px;width:132.0px;height:89.0px"><i class="hd" style="height:8.8px"></i><i style="left:7.9px;top:2.2px;width:7.9px;height:2.0px;background:#e8eef5"></i><i style="left:13.2px;top:4.2px;width:9.2px;height:2.0px;background:#f0c030"></i><i style="left:23.1px;top:2.8px;width:10.6px;height:2.0px;background:#dfe7f0"></i><i style="left:109.6px;top:2px;width:15.8px;height:4.4px;border:0.7px solid #c9d6e4;border-radius:1px"></i><i style="left:7.9px;top:12.2px;width:11.9px;height:0.9px;background:#aaa"></i><i style="left:31.3px;top:18.0px;width:69.4px;height:1.7px;background:#6e6e6e"></i><i style="left:58.9px;top:22.8px;width:13.9px;height:1.7px;background:#6e6e6e"></i><i style="left:25.5px;top:34.4px;width:47.1px;height:1.2px;background:#8a8a8a"></i><i style="left:26.2px;top:39.8px;width:9.2px;height:9.2px;border-radius:50%;background:#dcdcdc"></i><i style="left:28.5px;top:42.6px;width:4.6px;height:3.7px;background:#8a8a8a"></i><i style="left:38.0px;top:40.4px;width:37.0px;height:1.2px;background:#8a8a8a"></i><i style="left:38.0px;top:44.0px;width:62.0px;height:1.0px;background:#cdcdcd"></i><i style="left:38.0px;top:47.0px;width:33.0px;height:1.0px;background:#cdcdcd"></i><i style="left:26.2px;top:54.8px;width:9.2px;height:9.2px;border-radius:50%;background:#dcdcdc"></i><i style="left:28.5px;top:57.6px;width:4.6px;height:3.7px;background:#8a8a8a"></i><i style="left:38.0px;top:55.4px;width:37.0px;height:1.2px;background:#8a8a8a"></i><i style="left:38.0px;top:59.0px;width:62.0px;height:1.0px;background:#cdcdcd"></i><i style="left:38.0px;top:62.0px;width:11.9px;height:1.0px;background:#cdcdcd"></i><i style="left:50.8px;top:62.0px;width:37.0px;height:1.0px;background:#9dbbe2"></i><i style="left:103.8px;top:69.8px;width:20.9px;height:7.0px;background:#27598a"></i><i class="ft" style="height:5px"></i><i style="left:6.6px;bottom:1.9px;width:4.6px;height:1.1px;background:#7c96b0"></i><i style="left:14.5px;bottom:1.9px;width:17.2px;height:1.1px;background:#5f86ad"></i></div>
<div class="th" style="left:1397.0px;top:924.4px;width:41.4px;height:122.0px"><i class="hd" style="height:8.8px"></i><i style="left:3.0px;top:2.0px;width:3.6px;height:1.4px;background:#e8eef5"></i><i style="left:5.0px;top:3.6px;width:5.0px;height:1.6px;background:#f0c030"></i><i style="left:3.0px;top:5.2px;width:4.0px;height:1.2px;background:#dfe7f0"></i><i style="left:25.9px;top:1.8px;width:12px;height:4.6px;border:0.7px solid #c9d6e4;border-radius:1px"></i><i style="left:3px;top:10.8px;width:14px;height:3px;border:0.6px solid #999"></i><i style="left:3.0px;top:16.4px;width:32.4px;height:4.5px;background:repeating-linear-gradient(to bottom,#808080 0,#808080 1.3px,transparent 1.3px,transparent 3.2px)"></i><i style="left:3.0px;top:24.8px;width:33.4px;height:3.4px;background:repeating-linear-gradient(to bottom,#cdcdcd 0,#cdcdcd 1.0px,transparent 1.0px,transparent 2.4px)"></i><i style="left:3.4px;top:34.2px;width:5.2px;height:5.2px;border-radius:50%;background:#d8d8d8"></i><i style="left:4.7px;top:35.8px;width:2.6px;height:2.1px;background:#8a8a8a"></i><i style="left:12.5px;top:33.8px;width:24.4px;height:3.7px;background:repeating-linear-gradient(to bottom,#989898 0,#989898 1.1px,transparent 1.1px,transparent 2.6px)"></i><i style="left:12.5px;top:40.2px;width:24.4px;height:13.5px;background:repeating-linear-gradient(to bottom,#cdcdcd 0,#cdcdcd 1.0px,transparent 1.0px,transparent 2.5px)"></i><i style="left:12.5px;top:52.7px;width:17.4px;height:1.0px;background:#9dbbe2"></i><i style="left:3.4px;top:60.6px;width:5.2px;height:5.2px;border-radius:50%;background:#d8d8d8"></i><i style="left:4.7px;top:62.2px;width:2.6px;height:2.1px;background:#8a8a8a"></i><i style="left:12.5px;top:60.2px;width:24.4px;height:3.7px;background:repeating-linear-gradient(to bottom,#989898 0,#989898 1.1px,transparent 1.1px,transparent 2.6px)"></i><i style="left:12.5px;top:66.6px;width:24.4px;height:13.5px;background:repeating-linear-gradient(to bottom,#cdcdcd 0,#cdcdcd 1.0px,transparent 1.0px,transparent 2.5px)"></i><i style="left:12.5px;top:79.1px;width:17.4px;height:1.0px;background:#9dbbe2"></i><i style="left:3.4px;top:87.0px;width:5.2px;height:5.2px;border-radius:50%;background:#d8d8d8"></i><i style="left:4.7px;top:88.6px;width:2.6px;height:2.1px;background:#8a8a8a"></i><i style="left:12.5px;top:86.6px;width:24.4px;height:3.7px;background:repeating-linear-gradient(to bottom,#989898 0,#989898 1.1px,transparent 1.1px,transparent 2.6px)"></i><i style="left:6.5px;top:95.0px;width:28.4px;height:7.0px;background:#27598a"></i><i class="ft" style="height:10.4px;background:#3a3a3a"></i><i style="left:0;bottom:5.8px;width:100%;height:4.6px;background:#1f1f1f"></i><i style="left:0;bottom:0;width:100%;height:4.6px;background:#1f1f1f"></i><i style="left:3px;bottom:7.5px;width:4px;height:1.1px;background:#6f8fb0"></i><i style="left:3px;bottom:1.7px;width:14px;height:1.1px;background:#5f86ad"></i></div>
<div class="th" style="left:1724.0px;top:619.0px;width:132.4px;height:80.4px"><i class="hd" style="height:8.8px"></i><i style="left:7.9px;top:2.2px;width:7.9px;height:2.0px;background:#e8eef5"></i><i style="left:13.2px;top:4.2px;width:9.3px;height:2.0px;background:#f0c030"></i><i style="left:23.2px;top:2.8px;width:10.6px;height:2.0px;background:#dfe7f0"></i><i style="left:109.9px;top:2px;width:15.9px;height:4.4px;border:0.7px solid #c9d6e4;border-radius:1px"></i><i style="left:109.9px;top:13.2px;width:14.6px;height:0.9px;background:#8fb0dd"></i><i style="left:39.1px;top:17.8px;width:54.3px;height:1.7px;background:#6e6e6e"></i><i style="left:47.0px;top:22.8px;width:38.4px;height:1.7px;background:#6e6e6e"></i><i style="left:26.2px;top:33.1px;width:9.8px;height:9.8px;border-radius:50%;background:#dcdcdc"></i><i style="left:28.7px;top:36.0px;width:4.9px;height:3.9px;background:#8a8a8a"></i><i style="left:39.1px;top:35.0px;width:62.2px;height:3.6px;background:repeating-linear-gradient(to bottom,#8a8a8a 0,#8a8a8a 1.2px,transparent 1.2px,transparent 2.4px)"></i><i style="left:39.1px;top:41.4px;width:63.6px;height:5.8px;background:repeating-linear-gradient(to bottom,#cdcdcd 0,#cdcdcd 1.0px,transparent 1.0px,transparent 2.4px)"></i><i style="left:39.1px;top:53.2px;width:53.0px;height:1.0px;background:#999"></i><i style="left:93.9px;top:61.4px;width:30.8px;height:6.7px;background:#27598a"></i><i class="ft" style="height:5px"></i><i style="left:6.6px;bottom:1.9px;width:4.6px;height:1.1px;background:#7c96b0"></i><i style="left:14.6px;bottom:1.9px;width:17.2px;height:1.1px;background:#5f86ad"></i></div>
<div class="th" style="left:1868.0px;top:619.0px;width:41.8px;height:97.4px"><i class="hd" style="height:8.8px"></i><i style="left:3.0px;top:2.0px;width:3.6px;height:1.4px;background:#e8eef5"></i><i style="left:5.0px;top:3.6px;width:5.0px;height:1.6px;background:#f0c030"></i><i style="left:3.0px;top:5.2px;width:4.0px;height:1.2px;background:#dfe7f0"></i><i style="left:26.3px;top:1.8px;width:12px;height:4.6px;border:0.7px solid #c9d6e4;border-radius:1px"></i><i style="left:16.7px;top:12.0px;width:21.7px;height:2.4px;background:#d5e2f2"></i><i style="left:3.0px;top:17.8px;width:34.8px;height:4.5px;background:repeating-linear-gradient(to bottom,#808080 0,#808080 1.3px,transparent 1.3px,transparent 3.2px)"></i><i style="left:3.2px;top:26.0px;width:5.6px;height:5.6px;border-radius:50%;background:#d8d8d8"></i><i style="left:4.6px;top:27.7px;width:2.8px;height:2.2px;background:#8a8a8a"></i><i style="left:12.5px;top:25.8px;width:25.8px;height:8.9px;background:repeating-linear-gradient(to bottom,#989898 0,#989898 1.1px,transparent 1.1px,transparent 2.6px)"></i><i style="left:12.5px;top:37.8px;width:25.8px;height:13.5px;background:repeating-linear-gradient(to bottom,#cdcdcd 0,#cdcdcd 1.0px,transparent 1.0px,transparent 2.5px)"></i><i style="left:12.5px;top:55.8px;width:25.8px;height:8.5px;background:repeating-linear-gradient(to bottom,#cdcdcd 0,#cdcdcd 1.0px,transparent 1.0px,transparent 2.5px)"></i><i style="left:7.0px;top:71.0px;width:27.8px;height:7.0px;background:#27598a"></i><i style="left:2.30px;top:0px;width:37.20px;height:97.4px;background:repeating-linear-gradient(to right,rgba(235,40,40,0.12) 0,rgba(235,40,40,0.12) 8.21px,transparent 8.21px,transparent 9.66px)"></i><i class="ft" style="height:7.6px;background:#3a3a3a"></i><i style="left:0;bottom:4.3px;width:100%;height:3.3px;background:#1f1f1f"></i><i style="left:0;bottom:0;width:100%;height:3.3px;background:#1f1f1f"></i><i style="left:3px;bottom:5.3px;width:4px;height:1.1px;background:#6f8fb0"></i><i style="left:3px;bottom:1.1px;width:14px;height:1.1px;background:#5f86ad"></i></div>
<div class="th" style="left:1724.0px;top:716.6px;width:132.4px;height:77.6px"><i class="hd" style="height:8.8px"></i><i style="left:7.9px;top:2.2px;width:7.9px;height:2.0px;background:#e8eef5"></i><i style="left:13.2px;top:4.2px;width:9.3px;height:2.0px;background:#f0c030"></i><i style="left:23.2px;top:2.8px;width:10.6px;height:2.0px;background:#dfe7f0"></i><i style="left:109.9px;top:2px;width:15.9px;height:4.4px;border:0.7px solid #c9d6e4;border-radius:1px"></i><i style="left:109.9px;top:13.2px;width:14.6px;height:0.9px;background:#8fb0dd"></i><i style="left:39.1px;top:17.8px;width:54.3px;height:1.7px;background:#6e6e6e"></i><i style="left:47.0px;top:22.8px;width:38.4px;height:1.7px;background:#6e6e6e"></i><i style="left:26.2px;top:33.1px;width:9.8px;height:9.8px;border-radius:50%;background:#dcdcdc"></i><i style="left:28.7px;top:36.0px;width:4.9px;height:3.9px;background:#8a8a8a"></i><i style="left:39.1px;top:35.0px;width:62.2px;height:3.6px;background:repeating-linear-gradient(to bottom,#8a8a8a 0,#8a8a8a 1.2px,transparent 1.2px,transparent 2.4px)"></i><i style="left:39.1px;top:41.4px;width:63.6px;height:5.8px;background:repeating-linear-gradient(to bottom,#cdcdcd 0,#cdcdcd 1.0px,transparent 1.0px,transparent 2.4px)"></i><i style="left:39.1px;top:53.2px;width:53.0px;height:1.0px;background:#999"></i><i style="left:93.9px;top:61.0px;width:30.8px;height:6.7px;background:#27598a"></i><i class="ft" style="height:2.6px"></i><i style="left:6.6px;bottom:0.7px;width:4.6px;height:1.1px;background:#7c96b0"></i><i style="left:14.6px;bottom:0.7px;width:17.2px;height:1.1px;background:#5f86ad"></i></div>
<div class="th" style="left:1730.6px;top:859.4px;width:132.6px;height:98.0px"><i class="hd" style="height:8.8px"></i><i style="left:8.0px;top:2.2px;width:8.0px;height:2.0px;background:#e8eef5"></i><i style="left:13.3px;top:4.2px;width:9.3px;height:2.0px;background:#f0c030"></i><i style="left:23.2px;top:2.8px;width:10.6px;height:2.0px;background:#dfe7f0"></i><i style="left:110.1px;top:2px;width:15.9px;height:4.4px;border:0.7px solid #c9d6e4;border-radius:1px"></i><i style="left:110.1px;top:13.2px;width:14.6px;height:0.9px;background:#8fb0dd"></i><i style="left:39.1px;top:17.8px;width:54.4px;height:1.7px;background:#6e6e6e"></i><i style="left:47.1px;top:22.8px;width:38.5px;height:1.7px;background:#6e6e6e"></i><i style="left:26.3px;top:33.1px;width:9.8px;height:9.8px;border-radius:50%;background:#dcdcdc"></i><i style="left:28.7px;top:36.0px;width:4.9px;height:3.9px;background:#8a8a8a"></i><i style="left:39.1px;top:35.0px;width:62.3px;height:3.6px;background:repeating-linear-gradient(to bottom,#8a8a8a 0,#8a8a8a 1.2px,transparent 1.2px,transparent 2.4px)"></i><i style="left:39.1px;top:41.4px;width:63.6px;height:5.8px;background:repeating-linear-gradient(to bottom,#cdcdcd 0,#cdcdcd 1.0px,transparent 1.0px,transparent 2.4px)"></i><i style="left:38.5px;top:50.4px;width:66.3px;height:22.4px;background:#fdebc4;border-left:1px solid #f2c35b"></i><i style="left:42.4px;top:53.2px;width:43.8px;height:1.1px;background:#a0916a"></i><i style="left:42.4px;top:56.4px;width:58.3px;height:11.0px;background:repeating-linear-gradient(to bottom,#dccfae 0,#dccfae 1.0px,transparent 1.0px,transparent 2.5px)"></i><i style="left:94.0px;top:78.7px;width:31.0px;height:7.2px;background:#27598a"></i><i class="ft" style="height:5px"></i><i style="left:6.6px;bottom:1.9px;width:4.6px;height:1.1px;background:#7c96b0"></i><i style="left:14.6px;bottom:1.9px;width:17.2px;height:1.1px;background:#5f86ad"></i></div>
<div class="th" style="left:1874.0px;top:859.6px;width:41.6px;height:145.2px"><i class="hd" style="height:8.8px"></i><i style="left:3.0px;top:2.0px;width:3.6px;height:1.4px;background:#e8eef5"></i><i style="left:5.0px;top:3.6px;width:5.0px;height:1.6px;background:#f0c030"></i><i style="left:3.0px;top:5.2px;width:4.0px;height:1.2px;background:#dfe7f0"></i><i style="left:26.1px;top:1.8px;width:12px;height:4.6px;border:0.7px solid #c9d6e4;border-radius:1px"></i><i style="left:16.6px;top:12.0px;width:21.6px;height:2.4px;background:#d5e2f2"></i><i style="left:3.0px;top:17.8px;width:34.6px;height:4.5px;background:repeating-linear-gradient(to bottom,#808080 0,#808080 1.3px,transparent 1.3px,transparent 3.2px)"></i><i style="left:3.2px;top:26.0px;width:5.6px;height:5.6px;border-radius:50%;background:#d8d8d8"></i><i style="left:4.6px;top:27.7px;width:2.8px;height:2.2px;background:#8a8a8a"></i><i style="left:12.5px;top:25.8px;width:25.6px;height:8.9px;background:repeating-linear-gradient(to bottom,#989898 0,#989898 1.1px,transparent 1.1px,transparent 2.6px)"></i><i style="left:12.5px;top:37.8px;width:25.6px;height:13.5px;background:repeating-linear-gradient(to bottom,#cdcdcd 0,#cdcdcd 1.0px,transparent 1.0px,transparent 2.5px)"></i><i style="left:12px;top:56.8px;width:27.1px;height:54.6px;background:#fdebc4;border-left:1px solid #f2c35b"></i><i style="left:14.5px;top:59.8px;width:21.6px;height:6.4px;background:repeating-linear-gradient(to bottom,#a0916a 0,#a0916a 1.2px,transparent 1.2px,transparent 2.6px)"></i><i style="left:14.5px;top:68.8px;width:21.6px;height:38.5px;background:repeating-linear-gradient(to bottom,#dccfae 0,#dccfae 1.0px,transparent 1.0px,transparent 2.5px)"></i><i style="left:7.0px;top:119.2px;width:27.6px;height:7.0px;background:#27598a"></i><i class="ft" style="height:10.8px;background:#3a3a3a"></i><i style="left:0;bottom:6.0px;width:100%;height:4.8px;background:#1f1f1f"></i><i style="left:0;bottom:0;width:100%;height:4.8px;background:#1f1f1f"></i><i style="left:3px;bottom:7.8px;width:4px;height:1.1px;background:#6f8fb0"></i><i style="left:3px;bottom:1.8px;width:14px;height:1.1px;background:#5f86ad"></i></div>
<div class="th" style="left:1726.0px;top:1041.2px;width:132.4px;height:85.6px"><i class="hd" style="height:9.4px"></i><i style="left:7.9px;top:2.2px;width:7.9px;height:2.0px;background:#e8eef5"></i><i style="left:13.2px;top:4.2px;width:9.3px;height:2.0px;background:#f0c030"></i><i style="left:23.2px;top:2.8px;width:10.6px;height:2.0px;background:#dfe7f0"></i><i style="left:109.9px;top:2px;width:15.9px;height:4.4px;border:0.7px solid #c9d6e4;border-radius:1px"></i><i style="left:58.0px;top:16.8px;width:16.4px;height:16.4px;border-radius:50%;background:#dedede"></i><i style="left:62.1px;top:21.7px;width:8.2px;height:6.6px;background:#8a8a8a"></i><i style="left:39.7px;top:37.0px;width:53.0px;height:1.5px;background:#6e6e6e"></i><i style="left:27.8px;top:42.6px;width:76.8px;height:3.8px;background:repeating-linear-gradient(to bottom,#cdcdcd 0,#cdcdcd 1.0px,transparent 1.0px,transparent 2.8px)"></i><i style="left:27.8px;top:51.0px;width:22.5px;height:1.1px;background:#8a8a8a"></i><i style="left:27.8px;top:54.6px;width:15.9px;height:1.1px;background:#9dbbe2"></i><i style="left:27.8px;top:58.0px;width:29.1px;height:1.1px;background:#9dbbe2"></i><i style="left:53.6px;top:66.3px;width:25.2px;height:6.6px;background:#27598a"></i><i style="left:7.22px;top:0px;width:117.97px;height:85.6px;background:repeating-linear-gradient(to right,rgba(235,40,40,0.12) 0,rgba(235,40,40,0.12) 8.60px,transparent 8.60px,transparent 9.94px)"></i><i class="ft" style="height:5.4px"></i><i style="left:6.6px;bottom:2.1px;width:4.6px;height:1.1px;background:#7c96b0"></i><i style="left:14.6px;bottom:2.1px;width:17.2px;height:1.1px;background:#5f86ad"></i></div>
<div class="th" style="left:1870.0px;top:1041.2px;width:41.2px;height:99.0px"><i class="hd" style="height:9.4px"></i><i style="left:3.0px;top:2.0px;width:3.6px;height:1.4px;background:#e8eef5"></i><i style="left:5.0px;top:3.6px;width:5.0px;height:1.6px;background:#f0c030"></i><i style="left:3.0px;top:5.2px;width:4.0px;height:1.2px;background:#dfe7f0"></i><i style="left:25.7px;top:1.8px;width:12px;height:4.6px;border:0.7px solid #c9d6e4;border-radius:1px"></i><i style="left:12.6px;top:18.0px;width:16.0px;height:16.0px;border-radius:50%;background:#dedede"></i><i style="left:16.6px;top:22.8px;width:8.0px;height:6.4px;background:#8a8a8a"></i><i style="left:5.0px;top:37.6px;width:31.2px;height:7.5px;background:repeating-linear-gradient(to bottom,#808080 0,#808080 1.3px,transparent 1.3px,transparent 3.1px)"></i><i style="left:3.4px;top:51.0px;width:33.2px;height:11.0px;background:repeating-linear-gradient(to bottom,#cdcdcd 0,#cdcdcd 1.0px,transparent 1.0px,transparent 2.5px)"></i><i style="left:3.4px;top:68.0px;width:22.7px;height:1.1px;background:#8a8a8a"></i><i style="left:3.4px;top:71.4px;width:16.5px;height:1.1px;background:#9dbbe2"></i><i style="left:3.4px;top:74.8px;width:28.8px;height:1.1px;background:#9dbbe2"></i><i style="left:8.0px;top:76.0px;width:25.2px;height:7.0px;background:#27598a"></i><i class="ft" style="height:11.4px;background:#3a3a3a"></i><i style="left:0;bottom:6.4px;width:100%;height:5.0px;background:#1f1f1f"></i><i style="left:0;bottom:0;width:100%;height:5.0px;background:#1f1f1f"></i><i style="left:3px;bottom:8.3px;width:4px;height:1.1px;background:#6f8fb0"></i><i style="left:3px;bottom:1.9px;width:14px;height:1.1px;background:#5f86ad"></i></div>
<div class="th" style="left:1726.0px;top:1153.4px;width:132.4px;height:85.6px"><i class="hd" style="height:9.4px"></i><i style="left:7.9px;top:2.2px;width:7.9px;height:2.0px;background:#e8eef5"></i><i style="left:13.2px;top:4.2px;width:9.3px;height:2.0px;background:#f0c030"></i><i style="left:23.2px;top:2.8px;width:10.6px;height:2.0px;background:#dfe7f0"></i><i style="left:109.9px;top:2px;width:15.9px;height:4.4px;border:0.7px solid #c9d6e4;border-radius:1px"></i><i style="left:58.0px;top:16.8px;width:16.4px;height:16.4px;border-radius:50%;background:#dedede"></i><i style="left:62.1px;top:21.7px;width:8.2px;height:6.6px;background:#8a8a8a"></i><i style="left:39.7px;top:37.0px;width:53.0px;height:1.5px;background:#6e6e6e"></i><i style="left:27.8px;top:42.6px;width:76.8px;height:3.8px;background:repeating-linear-gradient(to bottom,#cdcdcd 0,#cdcdcd 1.0px,transparent 1.0px,transparent 2.8px)"></i><i style="left:27.8px;top:51.0px;width:22.5px;height:1.1px;background:#8a8a8a"></i><i style="left:27.8px;top:54.6px;width:15.9px;height:1.1px;background:#9dbbe2"></i><i style="left:27.8px;top:58.0px;width:29.1px;height:1.1px;background:#9dbbe2"></i><i style="left:53.6px;top:66.3px;width:25.2px;height:6.6px;background:#27598a"></i><i style="left:7.22px;top:0px;width:117.97px;height:85.6px;background:repeating-linear-gradient(to right,rgba(235,40,40,0.12) 0,rgba(235,40,40,0.12) 8.60px,transparent 8.60px,transparent 9.94px)"></i><i class="ft" style="height:5.4px"></i><i style="left:6.6px;bottom:2.1px;width:4.6px;height:1.1px;background:#7c96b0"></i><i style="left:14.6px;bottom:2.1px;width:17.2px;height:1.1px;background:#5f86ad"></i></div>
<div class="th" style="left:1726.0px;top:1255.4px;width:132.4px;height:40.0px"><i class="hd" style="height:8.8px"></i><i style="left:7.9px;top:2.2px;width:7.9px;height:2.0px;background:#e8eef5"></i><i style="left:13.2px;top:4.2px;width:9.3px;height:2.0px;background:#f0c030"></i><i style="left:23.2px;top:2.8px;width:10.6px;height:2.0px;background:#dfe7f0"></i><i style="left:109.9px;top:2px;width:15.9px;height:4.4px;border:0.7px solid #c9d6e4;border-radius:1px"></i><i class="ft" style="height:5px"></i><i style="left:6.6px;bottom:1.9px;width:4.6px;height:1.1px;background:#7c96b0"></i><i style="left:14.6px;bottom:1.9px;width:17.2px;height:1.1px;background:#5f86ad"></i></div>
<div class="th" style="left:524.0px;top:1167.4px;width:132.0px;height:79.0px"><i class="hd" style="height:9.4px"></i><i style="left:7.9px;top:2.2px;width:7.9px;height:2.0px;background:#e8eef5"></i><i style="left:13.2px;top:4.2px;width:9.2px;height:2.0px;background:#f0c030"></i><i style="left:23.1px;top:2.8px;width:10.6px;height:2.0px;background:#dfe7f0"></i><i style="left:109.6px;top:2px;width:15.8px;height:4.4px;border:0.7px solid #c9d6e4;border-radius:1px"></i><i style="left:57.6px;top:17.4px;width:16.8px;height:16.8px;border-radius:50%;background:#dedede"></i><i style="left:61.8px;top:22.4px;width:8.4px;height:6.7px;background:#8a8a8a"></i><i style="left:44.9px;top:38.2px;width:42.2px;height:1.6px;background:#6e6e6e"></i><i style="left:38.3px;top:44.0px;width:55.4px;height:3.7px;background:repeating-linear-gradient(to bottom,#cdcdcd 0,#cdcdcd 1.0px,transparent 1.0px,transparent 2.7px)"></i><i style="left:53.9px;top:55.8px;width:24.4px;height:6.6px;background:#27598a"></i><i style="left:7.19px;top:0px;width:117.61px;height:79px;background:repeating-linear-gradient(to right,rgba(235,40,40,0.12) 0,rgba(235,40,40,0.12) 8.57px,transparent 8.57px,transparent 9.91px)"></i><i class="ft" style="height:5px"></i><i style="left:6.6px;bottom:1.9px;width:4.6px;height:1.1px;background:#7c96b0"></i><i style="left:14.5px;bottom:1.9px;width:17.2px;height:1.1px;background:#5f86ad"></i></div>
<div class="th" style="left:679.0px;top:1167.4px;width:41.6px;height:87.0px"><i class="hd" style="height:8.8px"></i><i style="left:3.0px;top:2.0px;width:3.6px;height:1.4px;background:#e8eef5"></i><i style="left:5.0px;top:3.6px;width:5.0px;height:1.6px;background:#f0c030"></i><i style="left:3.0px;top:5.2px;width:4.0px;height:1.2px;background:#dfe7f0"></i><i style="left:26.1px;top:1.8px;width:12px;height:4.6px;border:0.7px solid #c9d6e4;border-radius:1px"></i><i style="left:12.8px;top:17.4px;width:16.0px;height:16.0px;border-radius:50%;background:#dedede"></i><i style="left:16.8px;top:22.2px;width:8.0px;height:6.4px;background:#8a8a8a"></i><i style="left:5.0px;top:38.4px;width:31.6px;height:4.7px;background:repeating-linear-gradient(to bottom,#808080 0,#808080 1.3px,transparent 1.3px,transparent 3.4px)"></i><i style="left:3.4px;top:47.4px;width:33.6px;height:6.6px;background:repeating-linear-gradient(to bottom,#cdcdcd 0,#cdcdcd 1.0px,transparent 1.0px,transparent 2.8px)"></i><i style="left:7.0px;top:60.4px;width:27.6px;height:7.4px;background:#27598a"></i><i class="ft" style="height:10.6px;background:#3a3a3a"></i><i style="left:0;bottom:5.9px;width:100%;height:4.7px;background:#1f1f1f"></i><i style="left:0;bottom:0;width:100%;height:4.7px;background:#1f1f1f"></i><i style="left:3px;bottom:7.7px;width:4px;height:1.1px;background:#6f8fb0"></i><i style="left:3px;bottom:1.7px;width:14px;height:1.1px;background:#5f86ad"></i></div>
<div class="th" style="left:763.8px;top:1168.2px;width:132.4px;height:74.0px"><i class="hd" style="height:8.8px"></i><i style="left:7.9px;top:2.2px;width:7.9px;height:2.0px;background:#e8eef5"></i><i style="left:13.2px;top:4.2px;width:9.3px;height:2.0px;background:#f0c030"></i><i style="left:23.2px;top:2.8px;width:10.6px;height:2.0px;background:#dfe7f0"></i><i style="left:109.9px;top:2px;width:15.9px;height:4.4px;border:0.7px solid #c9d6e4;border-radius:1px"></i><i style="left:57.8px;top:16.8px;width:16.8px;height:16.8px;border-radius:50%;background:#dedede"></i><i style="left:62.0px;top:21.8px;width:8.4px;height:6.7px;background:#8a8a8a"></i><i style="left:45.0px;top:37.6px;width:42.4px;height:1.6px;background:#6e6e6e"></i><i style="left:38.4px;top:43.4px;width:55.6px;height:3.7px;background:repeating-linear-gradient(to bottom,#cdcdcd 0,#cdcdcd 1.0px,transparent 1.0px,transparent 2.7px)"></i><i style="left:54.0px;top:55.2px;width:24.5px;height:6.6px;background:#27598a"></i><i class="ft" style="height:5px"></i><i style="left:6.6px;bottom:1.9px;width:4.6px;height:1.1px;background:#7c96b0"></i><i style="left:14.6px;bottom:1.9px;width:17.2px;height:1.1px;background:#5f86ad"></i></div>
<div class="th" style="left:919.4px;top:1168.2px;width:41.6px;height:87.4px"><i class="hd" style="height:8.8px"></i><i style="left:3.0px;top:2.0px;width:3.6px;height:1.4px;background:#e8eef5"></i><i style="left:5.0px;top:3.6px;width:5.0px;height:1.6px;background:#f0c030"></i><i style="left:3.0px;top:5.2px;width:4.0px;height:1.2px;background:#dfe7f0"></i><i style="left:26.1px;top:1.8px;width:12px;height:4.6px;border:0.7px solid #c9d6e4;border-radius:1px"></i><i style="left:12.8px;top:17.4px;width:16.0px;height:16.0px;border-radius:50%;background:#dedede"></i><i style="left:16.8px;top:22.2px;width:8.0px;height:6.4px;background:#8a8a8a"></i><i style="left:5.0px;top:38.4px;width:31.6px;height:4.7px;background:repeating-linear-gradient(to bottom,#808080 0,#808080 1.3px,transparent 1.3px,transparent 3.4px)"></i><i style="left:3.4px;top:47.4px;width:33.6px;height:6.6px;background:repeating-linear-gradient(to bottom,#cdcdcd 0,#cdcdcd 1.0px,transparent 1.0px,transparent 2.8px)"></i><i style="left:7.0px;top:62.6px;width:27.6px;height:7.4px;background:#27598a"></i><i class="ft" style="height:10.6px;background:#3a3a3a"></i><i style="left:0;bottom:5.9px;width:100%;height:4.7px;background:#1f1f1f"></i><i style="left:0;bottom:0;width:100%;height:4.7px;background:#1f1f1f"></i><i style="left:3px;bottom:7.7px;width:4px;height:1.1px;background:#6f8fb0"></i><i style="left:3px;bottom:1.7px;width:14px;height:1.1px;background:#5f86ad"></i></div>
<div class="lab" style="left:819.6px;top:387.8px;width:93.0px"></div><span class="t" style="left:829.40px;top:399px;font-size:17.6px;color:#fff;letter-spacing:0.454px;-webkit-text-stroke:0.45px #fff;">Eligibility</span>
<div class="gb" style="left:921.6px;top:387.8px"></div><svg width="20.8" height="11.2" style="left:930.2px;top:401.19999999999993px" viewBox="0 0 21 11" fill="none" stroke="#fff" stroke-width="1.5" stroke-linecap="round" stroke-linejoin="round"><path d="M5.4 0.8 L0.9 5.5 L5.4 10.2 M15.6 0.8 L20.1 5.5 L15.6 10.2 M12.4 0.6 L8.6 10.4"/></svg>
<div class="lab" style="left:1238.0px;top:387.8px;width:204.5px"></div><span class="t" style="left:1247.20px;top:399px;font-size:17.6px;color:#fff;letter-spacing:0.473px;-webkit-text-stroke:0.45px #fff;">Agency Card Eligibility</span>
<div class="lab" style="left:1719.4px;top:218.0px;width:219.6px"></div><span class="t" style="left:1729.00px;top:229px;font-size:17.6px;color:#fff;letter-spacing:0.422px;-webkit-text-stroke:0.45px #fff;">Agency Card Eligibility...</span>
<div class="lab" style="left:1785.0px;top:387.8px;width:175.0px"></div><span class="t" style="left:1795.00px;top:399px;font-size:17.6px;color:#fff;letter-spacing:0.499px;-webkit-text-stroke:0.45px #fff;">Agency Enrollment</span>
<div class="lab" style="left:1719.0px;top:560.4px;width:143.0px"></div><span class="t" style="left:1729.00px;top:572px;font-size:17.6px;color:#fff;letter-spacing:0.185px;-webkit-text-stroke:0.45px #fff;">IDG Enrollment</span>
<div class="gb" style="left:1871.0px;top:560.4px"></div><svg width="20.8" height="11.2" style="left:1879.6px;top:573.8px" viewBox="0 0 21 11" fill="none" stroke="#fff" stroke-width="1.5" stroke-linecap="round" stroke-linejoin="round"><path d="M5.4 0.8 L0.9 5.5 L5.4 10.2 M15.6 0.8 L20.1 5.5 L15.6 10.2 M12.4 0.6 L8.6 10.4"/></svg>
<div class="lab" style="left:1238.0px;top:639.6px;width:209.0px"></div><span class="t" style="left:1247.00px;top:651px;font-size:17.6px;color:#fff;letter-spacing:0.126px;-webkit-text-stroke:0.45px #fff;">Login_IDG Enrollment...</span>
<div class="lab" style="left:1238.0px;top:867.2px;width:173.0px"></div><span class="t" style="left:1247.00px;top:878px;font-size:17.6px;color:#fff;-webkit-text-stroke:0.45px #fff;">Medicare_IDG En...</span>
<div class="gb" style="left:1420.8px;top:867.2px"></div><svg width="20.8" height="11.2" style="left:1429.3999999999999px;top:880.5999999999999px" viewBox="0 0 21 11" fill="none" stroke="#fff" stroke-width="1.5" stroke-linecap="round" stroke-linejoin="round"><path d="M5.4 0.8 L0.9 5.5 L5.4 10.2 M15.6 0.8 L20.1 5.5 L15.6 10.2 M12.4 0.6 L8.6 10.4"/></svg>
<div class="lab" style="left:1719.0px;top:795.0px;width:186.0px"></div><span class="t" style="left:1729.00px;top:806px;font-size:17.6px;color:#fff;letter-spacing:0.186px;-webkit-text-stroke:0.45px #fff;">CF_Enrollment_Alert</span>
<div class="lab" style="left:1720.0px;top:983.1px;width:138.0px"></div><span class="t" style="left:1729.30px;top:994px;font-size:17.6px;color:#fff;letter-spacing:0.408px;-webkit-text-stroke:0.45px #fff;">Eligibility Error</span>
<div class="gb" style="left:1867.2px;top:983.1px"></div><svg width="20.8" height="11.2" style="left:1875.8px;top:996.5px" viewBox="0 0 21 11" fill="none" stroke="#fff" stroke-width="1.5" stroke-linecap="round" stroke-linejoin="round"><path d="M5.4 0.8 L0.9 5.5 L5.4 10.2 M15.6 0.8 L20.1 5.5 L15.6 10.2 M12.4 0.6 L8.6 10.4"/></svg>
<span class="t" style="left:1113.50px;top:456px;font-size:16.4px;color:#fff;letter-spacing:-0.131px;-webkit-text-stroke:0.4px #fff;">Agency Card</span>
<span class="t" style="left:1134.50px;top:695px;font-size:16.4px;color:#fff;letter-spacing:0.172px;-webkit-text-stroke:0.4px #fff;">Login.gov</span>
<span class="t" style="left:1138.40px;top:913px;font-size:16.4px;color:#fff;letter-spacing:0.164px;-webkit-text-stroke:0.4px #fff;">Medicare</span>
<span class="t" style="left:1667.70px;top:1063px;font-size:11.6px;color:#fff;letter-spacing:-0.271px;-webkit-text-stroke:0.3px #fff;">Login</span>
<span class="t" style="left:1659.00px;top:1174px;font-size:11.6px;color:#fff;letter-spacing:-0.315px;-webkit-text-stroke:0.3px #fff;">Non-Login</span>
<span class="t" style="left:1517.50px;top:421px;font-size:17px;color:#a6a6a6;letter-spacing:0.318px;">AC_Eligibility...</span>
<span class="t" style="left:1664.00px;top:421px;font-size:17px;color:#a6a6a6;letter-spacing:-0.113px;">M...</span>
<span class="t" style="left:765.00px;top:1146px;font-size:17.4px;color:#b4b4b4;letter-spacing:0.988px;">500</span>
<span class="t" style="left:919.50px;top:1146px;font-size:17.4px;color:#b4b4b4;letter-spacing:-0.169px;">M...</span>
<span class="t" style="left:840.60px;top:426px;font-size:16.8px;color:#7fbcf6;letter-spacing:0.545px;-webkit-text-stroke:0.2px #7fbcf6;">Eligibiilty</span>
<div class="b" style="left:838.60px;top:447.60px;width:133.40px;height:139.40px;border:2px solid #3d8ef5;"></div>
<div class="b" style="left:833.60px;top:442.60px;width:12.00px;height:12.00px;background:#fff;border:2px solid #3d8ef5;"></div>
<div class="b" style="left:965.00px;top:442.60px;width:12.00px;height:12.00px;background:#fff;border:2px solid #3d8ef5;"></div>
<div class="b" style="left:833.60px;top:580.00px;width:12.00px;height:12.00px;background:#fff;border:2px solid #3d8ef5;"></div>
<div class="b" style="left:965.00px;top:580.00px;width:12.00px;height:12.00px;background:#fff;border:2px solid #3d8ef5;"></div>
<div class="b" style="left:849.00px;top:596.80px;width:112.30px;height:26.80px;background:#4597f7;border-radius:5px;"></div>
<span class="t" style="left:855.70px;top:603px;font-size:17.4px;color:#fff;letter-spacing:0.185px;-webkit-text-stroke:0.3px #fff;">1200 × 1240</span>
<div class="b" style="left:839.40px;top:604.00px;width:6.00px;height:4.60px;background:#f1a03c;border-radius:1.5px;"></div>
<div class="b" style="left:843.00px;top:605.60px;width:6.40px;height:4.00px;background:#f4f4f4;"></div>
<div class="av" style="left:945.5px;top:484.6px;width:50px;height:50px"></div><div class="avg" style="left:951.5px;top:490.6px;width:38px;height:38px"></div><span class="t" style="left:963.60px;top:499px;font-size:20.6px;color:#fff;-webkit-text-stroke:0.2px #fff;">S</span>
<div class="av" style="left:1431.5px;top:718.0px;width:50px;height:50px"></div><div class="avg" style="left:1437.5px;top:724.0px;width:38px;height:38px"></div><span class="t" style="left:1449.60px;top:733px;font-size:20.6px;color:#fff;-webkit-text-stroke:0.2px #fff;">S</span>
<div class="av" style="left:1841.0px;top:684.0px;width:50px;height:50px"></div><div class="avg" style="left:1847.0px;top:690.0px;width:38px;height:38px"></div><span class="t" style="left:1859.10px;top:699px;font-size:20.6px;color:#fff;-webkit-text-stroke:0.2px #fff;">S</span>
<div class="b" style="left:1336.50px;top:950.70px;width:100.00px;height:100.00px;background:#fff;border-radius:50%;box-shadow:0 2px 8px rgba(0,0,0,0.3);"></div>
<div class="b" style="left:1373.80px;top:982.00px;width:38.00px;height:38.00px;background:#aedbb8;border-radius:50%;"></div>
<div class="b" style="left:1360.60px;top:982.00px;width:38.00px;height:38.00px;background:#4fab68;border-radius:50%;"></div>
<span class="t" style="left:1372.70px;top:991px;font-size:20.6px;color:#fff;-webkit-text-stroke:0.2px #fff;">S</span>
<div class="b" style="left:1978.00px;top:84.70px;width:13.00px;height:429.00px;background:#232323;border:1.6px solid #747474;border-radius:7px;"></div>
<div class="b" style="left:1997.00px;top:78.30px;width:2.00px;height:1181.00px;background:#f4f4f4;"></div>
<div class="b" style="left:0.00px;top:1257.00px;width:1999.00px;height:2.00px;background:#1e1e1e;z-index:50;"></div>
<div class="lp"></div>
<svg width="24" height="24" style="left:24px;top:98px" fill="none" stroke="#222" stroke-width="1.8" stroke-linecap="round"><circle cx="9.2" cy="9.8" r="6.2"/><path d="M13.8 14.4 L19.2 19.8"/></svg>
<span class="t" style="left:61.40px;top:102px;font-size:17.5px;color:#111;font-weight:700;letter-spacing:-0.267px;">Layers</span>
<span class="t" style="left:141.70px;top:102px;font-size:17.5px;color:#9a9a9a;letter-spacing:0.557px;-webkit-text-stroke:0.3px #9a9a9a;">Assets</span>
<svg width="19" height="18" style="left:339.6px;top:101.2px" viewBox="0 0 19 18"><rect x="0.6" y="0.4" width="17.4" height="15" rx="2.6" fill="#fbf4d2"/><rect x="0.6" y="2.6" width="17.4" height="12.6" rx="1.6" fill="#f8d545"/><rect x="0.6" y="10.4" width="17.4" height="2.8" fill="#ee7d36"/><rect x="0.6" y="13" width="17.4" height="1.6" fill="#3a3a3c"/><path d="M0.6 3 H3.4 V10.6 L0.6 10.4 Z" fill="#a9cfd6"/><path d="M3.4 2.8 H16.2 V8.2 H6.6 L5 9.8 H3.4 Z" fill="#5aaed4"/><path d="M4.6 3.2 V7.8 M7 3.2 V7.8 M9.4 3.2 V7.8 M11.8 3.2 V7.8 M14.2 3.2 V7.8" stroke="#84cfe4" stroke-width="1.1"/><circle cx="4.2" cy="14.8" r="2.5" fill="#38393b"/><circle cx="14.2" cy="14.8" r="2.5" fill="#38393b"/><circle cx="4.2" cy="14.8" r="1" fill="#70757a"/><circle cx="14.2" cy="14.8" r="1" fill="#70757a"/></svg>
<span class="t" style="left:363.30px;top:102px;font-size:17.5px;color:#111;letter-spacing:0.299px;-webkit-text-stroke:0.25px #111;">Benefits Full App</span>
<svg width="12" height="8" style="left:507px;top:105.6px" fill="none" stroke="#aaa" stroke-width="1.3"><path d="M0.6 6 L5.6 1 L10.6 6"/></svg>
<div class="b" style="left:0.00px;top:142.00px;width:545.30px;height:1.00px;background:#e6e6e6;"></div>
<div class="b" style="left:23.20px;top:162.00px;width:25.60px;height:25.40px;background:#4fab68;border-radius:4.5px;"></div>
<svg width="17.6" height="10.2" style="left:27.2px;top:169.6px" viewBox="0 0 21 11" fill="none" stroke="#fff" stroke-width="1.7" stroke-linecap="round" stroke-linejoin="round"><path d="M5.4 0.8 L0.9 5.5 L5.4 10.2 M15.6 0.8 L20.1 5.5 L15.6 10.2 M12.4 0.6 L8.6 10.4"/></svg>
<span class="t" style="left:61.40px;top:167px;font-size:17.5px;color:#222;letter-spacing:0.345px;-webkit-text-stroke:0.2px #222;">Ready for dev</span>
<span class="t" style="left:502.00px;top:168px;font-size:14.5px;color:#8a8a8a;">7</span>
<div class="b" style="left:0.00px;top:206.40px;width:545.30px;height:1.00px;background:#e6e6e6;"></div>
<span class="t" style="left:23.80px;top:232px;font-size:17.5px;color:#111;font-weight:700;letter-spacing:-0.139px;">Pages</span>
<svg width="20" height="20" style="left:496px;top:229px" fill="none" stroke="#222" stroke-width="1.5"><path d="M10 1.5 V18.5 M1.5 10 H18.5"/></svg>
<span class="t" style="left:61.40px;top:282px;font-size:17.5px;color:#222;letter-spacing:0.278px;-webkit-text-stroke:0.2px #222;">Cover</span>
<svg width="20" height="17" style="left:61px;top:332px" viewBox="61 332 20 17"><ellipse cx="70.3" cy="339.8" rx="9.4" ry="6.4" transform="rotate(27 70.3 339.8)" fill="#d9a251"/><path d="M72 347.6 L73.6 343.6 L76.4 346 Z" fill="#fff"/><ellipse cx="65.3" cy="337" rx="2.2" ry="1.6" transform="rotate(35 65.3 337)" fill="#4aa8e8"/><ellipse cx="69.4" cy="335.2" rx="1.9" ry="1.5" transform="rotate(20 69.4 335.2)" fill="#4cc23a"/><ellipse cx="74.4" cy="337.4" rx="1.7" ry="1.4" transform="rotate(30 74.4 337.4)" fill="#f2d23a"/><ellipse cx="77.2" cy="341.8" rx="1.7" ry="1.4" transform="rotate(45 77.2 341.8)" fill="#ee5a3c"/><ellipse cx="68.4" cy="342.5" rx="2.2" ry="1.6" transform="rotate(25 68.4 342.5)" fill="#8e3fd8"/><ellipse cx="73.5" cy="340.9" rx="1.5" ry="1.1" transform="rotate(30 73.5 340.9)" fill="#fdf8ee"/></svg>
<span class="t" style="left:84.70px;top:333px;font-size:17.5px;color:#222;letter-spacing:0.453px;-webkit-text-stroke:0.2px #222;">Styleguide</span>
<svg width="20" height="20" style="left:60px;top:380px" viewBox="60 380 20 20" fill="#1a1a1a"><path d="M70.4 381.8 L74.15 385.55 L70.4 389.3 L66.65 385.55 Z M70.4 390.3 L74.15 394.05 L70.4 397.8 L66.65 394.05 Z M66.15 386.05 L69.9 389.8 L66.15 393.55 L62.400000000000006 389.8 Z M74.65 386.05 L78.4 389.8 L74.65 393.55 L70.9 389.8 Z"/></svg>
<span class="t" style="left:84.70px;top:383px;font-size:17.5px;color:#222;letter-spacing:0.497px;-webkit-text-stroke:0.2px #222;">Components</span>
<div class="b" style="left:0.00px;top:725.00px;width:25.00px;height:1.00px;background:#e6e6e6;"></div>
<div class="b" style="left:0.00px;top:1007.60px;width:25.50px;height:49.30px;background:#dfeefb;"></div>
<div class="b" style="left:27.00px;top:1192.00px;width:18.00px;height:1.20px;background:#777;"></div>
<div class="b" style="left:84.00px;top:1192.00px;width:7.00px;height:2.00px;background:#444;border-radius:0 0 3px 3px;"></div>
<div class="b" style="left:312.00px;top:1192.00px;width:6.00px;height:2.60px;background:#444;border-radius:0 0 2px 2px;"></div>
<svg width="20" height="19" style="left:26.4px;top:1224.6px" fill="none" stroke="#a6a6a6" stroke-width="1.3"><rect x="1.2" y="0.8" width="17.6" height="17.2"/><path d="M1.2 6.6 H10.2 V0.8"/></svg>
<span class="t" style="left:61.60px;top:1226px;font-size:17.5px;color:#111;font-weight:700;letter-spacing:0.157px;">IDG Enrollment</span>
<div class="pg"></div>
<div class="pgc"><div class="b" style="left:-25.2px;top:-419.8px;width:600px;height:1259px">
<div class="b" style="left:44.00px;top:438.60px;width:25.20px;height:25.80px;background:#f6f6f6;border-radius:6px;"></div>
<svg width="19.0" height="18.0" viewBox="0 0 19 18" style="left:47.2px;top:442.2px"><defs><radialGradient id="pg1" cx="0.5" cy="0.45" r="0.6"><stop offset="0" stop-color="#fbe676"/><stop offset="0.6" stop-color="#f5c445"/><stop offset="1" stop-color="#e9a43a"/></radialGradient></defs><path d="M1.2 10.8 C1.6 7.6 3.2 5.2 5.4 4.6 C7.4 4 9 5 10.6 6.2 C12.6 7.2 15 7.4 17.6 8 C18.4 8.2 18.6 9 18.6 10 L18.6 14.4 C18.6 15.6 17.8 16.2 16.6 16.2 L5 16.6 C3 16.6 1.4 15.8 1.2 14 Z" fill="url(#pg1)"/><path d="M12.2 0.6 L4.6 11.4" stroke="#1c1c1c" stroke-width="1.7" stroke-linecap="round"/><path d="M2.6 14.6 L0.9 17.2" stroke="#222" stroke-width="1.3" stroke-linecap="round"/><path d="M3.6 15.8 C6 14.4 8.4 15.6 10.4 15 C11.6 14.6 12.4 15.4 13.6 15.6" stroke="#d68f2c" stroke-width="0.9" fill="none"/></svg>
<svg width="19.0" height="18.0" viewBox="0 0 19 18" style="left:81.4px;top:442.2px"><defs><radialGradient id="pg2" cx="0.5" cy="0.45" r="0.6"><stop offset="0" stop-color="#fbe676"/><stop offset="0.6" stop-color="#f5c445"/><stop offset="1" stop-color="#e9a43a"/></radialGradient></defs><path d="M1.2 10.8 C1.6 7.6 3.2 5.2 5.4 4.6 C7.4 4 9 5 10.6 6.2 C12.6 7.2 15 7.4 17.6 8 C18.4 8.2 18.6 9 18.6 10 L18.6 14.4 C18.6 15.6 17.8 16.2 16.6 16.2 L5 16.6 C3 16.6 1.4 15.8 1.2 14 Z" fill="url(#pg2)"/><path d="M12.2 0.6 L4.6 11.4" stroke="#1c1c1c" stroke-width="1.7" stroke-linecap="round"/><path d="M2.6 14.6 L0.9 17.2" stroke="#222" stroke-width="1.3" stroke-linecap="round"/><path d="M3.6 15.8 C6 14.4 8.4 15.6 10.4 15 C11.6 14.6 12.4 15.4 13.6 15.6" stroke="#d68f2c" stroke-width="0.9" fill="none"/></svg>
<span class="t" style="left:104.90px;top:444px;font-size:17.8px;color:#111;font-weight:700;letter-spacing:-0.159px;">Ditto | Manage copy from design to production</span>
<svg width="20" height="20" style="left:518.4px;top:441.5px" fill="none" stroke="#222" stroke-width="1.5"><path d="M2 2 L18 18 M18 2 L2 18"/></svg>
<div class="b" style="left:25.00px;top:483.00px;width:535.00px;height:1.00px;background:#e8e8e8;"></div>
<div class="b" style="left:25.00px;top:484.00px;width:535.00px;height:65.20px;background:#fafafa;"></div>
<div class="b" style="left:25.00px;top:549.00px;width:535.00px;height:1.00px;background:#e6e6e6;"></div>
<span class="t" style="left:47.50px;top:507px;font-size:19px;color:#686868;letter-spacing:0.645px;-webkit-text-stroke:0.2px #686868;">Project</span>
<span class="t" style="left:134.80px;top:507px;font-size:19px;color:#111;letter-spacing:0.565px;-webkit-text-stroke:0.45px #111;">Selected</span>
<span class="t" style="left:237.60px;top:507px;font-size:19px;color:#5a5a5a;letter-spacing:0.674px;-webkit-text-stroke:0.2px #5a5a5a;">Components</span>
<div class="b" style="left:134.80px;top:545.20px;width:78.00px;height:4.00px;background:#111;border-radius:2px;"></div>
<span class="t" style="left:389.70px;top:502px;font-size:14px;color:#b0b0b0;letter-spacing:0.573px;-webkit-text-stroke:0.15px #b0b0b0;">Last sync 49</span>
<span class="t" style="left:415.30px;top:518px;font-size:14px;color:#b0b0b0;letter-spacing:0.467px;-webkit-text-stroke:0.15px #b0b0b0;">secs ago</span>
<svg width="30" height="33" style="left:486px;top:502px" fill="none" stroke="#7a7a7a" stroke-width="2.8" stroke-linecap="butt"><path d="M4.9 20.5 A10.4 10.4 0 0 1 14.3 5.7"/><path d="M23.7 11.7 A10.4 10.4 0 0 1 14.3 26.5"/><path d="M13.4 1 L19.4 5.7 L13.4 10.4 Z" fill="#7a7a7a" stroke="none"/><path d="M15.2 21.8 L9.2 26.5 L15.2 31.2 Z" fill="#7a7a7a" stroke="none"/></svg>
<div class="b" style="left:529.00px;top:502.10px;width:5.60px;height:5.60px;background:#707070;border-radius:50%;"></div>
<div class="b" style="left:529.00px;top:510.80px;width:5.60px;height:5.60px;background:#707070;border-radius:50%;"></div>
<div class="b" style="left:529.00px;top:519.50px;width:5.60px;height:5.60px;background:#707070;border-radius:50%;"></div>
<span class="t" style="left:47.60px;top:575px;font-size:23.8px;color:#111;font-weight:700;letter-spacing:-0.043px;">Frame Selected</span>
<div class="b" style="left:47.20px;top:613.20px;width:490.40px;height:161.80px;background:#dbe4f8;border-radius:5px;"></div>
<svg width="24" height="22" style="left:64px;top:629px" viewBox="64 629 24 22" fill="none" stroke="#4a7fe8" stroke-width="1.8" stroke-linecap="butt" stroke-linejoin="miter"><path d="M66.8 640.3 H75.4 L83 632.9"/><path d="M78.4 632.4 H83.6 V637.6"/><path d="M78.2 643 L83 647.8"/><path d="M83.6 642.8 V648.2 H78.4"/></svg>
<span class="t" style="left:95.00px;top:631px;font-size:18px;color:#3f7bea;font-weight:700;letter-spacing:0.361px;">Preview Variants</span>
<svg width="16" height="16" style="left:417px;top:634px" viewBox="417 634 16 16" fill="none" stroke="#7fa5f0" stroke-width="1.6"><path d="M430.8 635.6 L419 646.8 M418.9 637 V647 H430.2"/></svg>
<span class="t" style="left:437.30px;top:631px;font-size:18.2px;color:#7fa5f0;letter-spacing:0.245px;-webkit-text-stroke:0.15px #7fa5f0;">Apply</span>
<svg width="16" height="10" style="left:502px;top:633px" viewBox="502 633 16 10" fill="none" stroke="#4a7fe8" stroke-width="2.1"><path d="M503.8 641.4 L509.7 635.6 L515.6 641.4"/></svg>
<div class="b" style="left:61.80px;top:667.00px;width:462.00px;height:62.60px;background:#fff;border:3px solid #4583f3;border-radius:8px;"></div>
<div class="b" style="left:74.40px;top:688.00px;width:1.20px;height:20.80px;background:#222;"></div>
<span class="t" style="left:78.00px;top:690px;font-size:17px;color:#333;letter-spacing:-0.048px;-webkit-text-stroke:0.15px #333;">Base</span>
<div class="b" style="left:462.60px;top:682.60px;width:1.20px;height:30.80px;background:#ccc;"></div>
<svg width="20" height="12" style="left:482.4px;top:693.4px" fill="none" stroke="#2a2a2a" stroke-width="2.9" stroke-linecap="round" stroke-linejoin="round"><path d="M2 2.4 L9.9 9.8 L17.8 2.4"/></svg>
<span class="t" style="left:46.40px;top:784px;font-size:23.8px;color:#333;font-weight:700;">18</span>
<div class="b" style="left:47.90px;top:823.00px;width:489.40px;height:52.00px;background:#f7f8fa;border-radius:6px;"></div>
<span class="t" style="left:55.50px;top:834px;font-size:13px;color:#d4d4d4;">Y</span>
<span class="t" style="left:55.50px;top:851px;font-size:13px;color:#d4d4d4;">e</span>
<svg width="14" height="20" style="left:51px;top:898px"><path d="M1.6 1 H12 V10 H3.6 V18 H1.6 Z" fill="#c4c4c4"/></svg>
<div class="b" style="left:167.70px;top:891.70px;width:369.60px;height:31.40px;background:#fff;border:1px solid #ececec;border-radius:6px;"></div>
<div class="b" style="left:167.70px;top:940.00px;width:369.60px;height:49.00px;background:#fafafa;border:1px solid #ececec;border-radius:6px;"></div>
<svg width="22" height="22" style="left:48px;top:954px"><circle cx="11" cy="11" r="10" fill="#d0d0d0"/><circle cx="11" cy="8.4" r="3.6" fill="#fff"/><path d="M4.4 17.4 C6 13.4 16 13.4 17.6 17.4 A10 10 0 0 1 4.4 17.4" fill="#fff"/></svg>
<svg width="24" height="24" style="left:48px;top:1018px"><path d="M1.4 2.2 L1.4 9.4 L12.6 20.6 C13.4 21.4 14.6 21.4 15.4 20.6 L20.8 15.2 C21.6 14.4 21.6 13.2 20.8 12.4 L9.6 1.2 L2.4 1.2 C1.8 1.2 1.4 1.6 1.4 2.2 Z" fill="#cdcdcd"/><circle cx="5.6" cy="5.4" r="1.6" fill="#fff"/></svg>
<span class="t" style="left:82.70px;top:1020px;font-size:18.5px;color:#a8a8a8;letter-spacing:1.009px;-webkit-text-stroke:0.2px #a8a8a8;">Tags</span>
<div class="b" style="left:167.70px;top:1006.70px;width:369.60px;height:45.00px;background:#fff;border:1px solid #ececec;border-radius:7px;"></div>
<span class="t" style="left:47.90px;top:1082px;font-size:16.8px;color:#8a8a8a;letter-spacing:0.669px;-webkit-text-stroke:0.15px #8a8a8a;">Click a text item to view and edit its details.</span>
<div class="b" style="left:47.90px;top:1112.00px;width:489.40px;height:60.00px;background:#f5f6f8;border:1px solid #eeeeee;border-radius:7px;"></div>
<div class="b" style="left:70.50px;top:1128.60px;width:16.00px;height:5.40px;background:#666;border-radius:2px;"></div>
<div class="b" style="left:70.50px;top:1136.20px;width:16.00px;height:5.00px;background:#666;border-radius:2px;"></div>
<span class="t" style="left:96.60px;top:1124px;font-size:18px;color:#7a7a7a;font-weight:700;letter-spacing:0.240px;">Footer</span>
<div class="b" style="left:25.00px;top:1139.00px;width:535.00px;height:53.00px;background:#fbfbfb;border-top:1px solid #ececec;"></div>
<span class="t" style="left:50.80px;top:1158px;font-size:17.2px;color:#b2b2b2;font-weight:700;letter-spacing:0.143px;">3 text layers hidden in Ditto</span>
<svg width="12" height="8" style="left:516.6px;top:1162px"><path d="M0.6 6.4 L5.4 0.8 L10.2 6.4 Z" fill="#b0b0b0"/></svg>
<div class="b" style="left:62.20px;top:739.60px;width:460.60px;height:253.00px;background:#fff;border:1px solid #dedede;border-radius:4px;box-shadow:0 3px 8px rgba(0,0,0,0.18);"></div>
<div class="b" style="left:62.80px;top:747.00px;width:459.60px;height:48.30px;background:#4683f5;"></div>
<span class="t" style="left:82.20px;top:762px;font-size:17.3px;color:#fff;letter-spacing:-0.076px;-webkit-text-stroke:0.2px #fff;">Base</span>
<span class="t" style="left:82.10px;top:811px;font-size:17.3px;color:#111;letter-spacing:0.190px;-webkit-text-stroke:0.2px #111;">MST</span>
<span class="t" style="left:82.10px;top:860px;font-size:17.3px;color:#111;letter-spacing:0.088px;-webkit-text-stroke:0.2px #111;">SBMTD</span>
<span class="t" style="left:82.10px;top:908px;font-size:17.3px;color:#111;letter-spacing:0.313px;-webkit-text-stroke:0.2px #111;">Spanish</span>
<span class="t" style="left:82.10px;top:957px;font-size:17.3px;color:#111;letter-spacing:0.425px;-webkit-text-stroke:0.2px #111;">Spanish - MST</span>
</div></div>
<div class="tb">
<div class="b" style="left:0.00px;top:0.00px;width:1999.00px;height:3.20px;background:#1b1b1b;"></div>
<div class="b" style="left:121.00px;top:0.00px;width:1.50px;height:3.20px;background:#3a3a3a;"></div>
<div class="b" style="left:186.00px;top:0.00px;width:1.50px;height:3.20px;background:#3a3a3a;"></div>
<div class="b" style="left:569.00px;top:0.00px;width:1.50px;height:3.20px;background:#3a3a3a;"></div>
<div class="b" style="left:1324.00px;top:0.00px;width:329.00px;height:3.20px;background:#2c2c2c;"></div>
<div class="b" style="left:959.00px;top:0.00px;width:1.50px;height:3.20px;background:#333;"></div>
<div class="b" style="left:80.00px;top:3.20px;width:75.60px;height:75.10px;background:#4597f7;"></div>
<svg width="1999" height="78" style="left:0;top:0" fill="none" stroke="#fff" stroke-width="1.5" stroke-linejoin="round" stroke-linecap="round"><g transform="translate(22.3,28.4)" stroke-width="1.5"><path d="M8.85 0.8 H5 a4 4 0 0 0 0 8 H8.85 Z"/><path d="M8.85 0.8 H12.7 a4 4 0 0 1 0 8 H8.85 Z"/><path d="M8.85 8.8 H5 a4 4 0 0 0 0 8 H8.85 Z"/><circle cx="12.85" cy="12.8" r="4"/><path d="M8.85 16.8 H5 a4 4 0 1 0 3.85 4 Z"/></g><path class="chev" d="M48.7 38.3 l5.0 5.2 l5.0 -5.2"/><path d="M104.2 31 L109 51 L112.8 43.8 L122 41 Z" stroke-width="1.6"/><path class="chev" d="M136 38.3 l5.0 5.2 l5.0 -5.2"/><path d="M183.2 28.3 V53.4 M197 28.3 V53.4 M177.6 34.2 H202.8 M177.6 47.6 H202.8" stroke-linecap="butt" stroke-width="1.6"/><path class="chev" d="M212 38.3 l5.0 5.2 l5.0 -5.2"/><rect x="252.3" y="29.2" width="24" height="23.6" stroke-width="1.6" stroke-linejoin="miter"/><path class="chev" d="M287.6 38.3 l5.0 5.2 l5.0 -5.2"/><g transform="translate(327,28)"><path d="M1 1.2 L14.5 6 C18 9 20 14 21 18.5 L24 21.5 L19.5 25 L16 22.5 C11 22 7 19.5 5 15 Z" stroke-width="1.5"/><path d="M1 1.2 L12 13"/><circle cx="13" cy="14" r="2" fill="#fff" stroke="none"/></g><path class="chev" d="M363 38.3 l5.0 5.2 l5.0 -5.2"/><path d="M403.2 33.5 V29 H423.4 V33.5 M413.3 29 V53 M408 53.3 H418.6" stroke-width="1.6" stroke-linecap="butt" stroke-linejoin="miter"/><rect x="466" y="29" width="7.6" height="7.6" stroke-linejoin="miter"/><path d="M483.3 28.4 V37.6 M478.7 33 H487.9" stroke-linecap="butt"/><path d="M469.8 42.6 L475.2 48 L469.8 53.4 L464.4 48 Z" stroke-linejoin="miter"/><rect x="479.6" y="44" width="7.6" height="7.6" stroke-linejoin="miter"/><g transform="translate(524,25)"><path d="M9.5 17 V6.5 a2.1 2.1 0 0 1 4.2 0 V15 M13.7 6 V4.2 a2.1 2.1 0 0 1 4.2 0 V15 M17.9 6.2 a2.1 2.1 0 0 1 4.2 0 V15.5 M22.1 10 a2.1 2.1 0 0 1 4.2 0 V21 C26.3 27.5 22.5 31 17.5 31 C13 31 10.5 29.5 8 26 L2.2 17.8 C0.8 15.6 3.6 13.6 5.4 15.6 L9.5 20.5" stroke-width="1.5"/></g><path d="M606.5 30.6 A12 12 0 1 0 612.9 41.2 A 12 12 0 0 1 593.5 50.3 L588 52.6 L590.6 47.5 A12 12 0 0 1 606.5 30.6" stroke-width="1.5"/><circle cx="614.8" cy="29.6" r="6.4" fill="#e2553a" stroke="none"/><path d="M1118 27.700000000000003 L1122.9 32.6 L1118 37.5 L1113.1 32.6 Z" stroke-linejoin="miter" stroke-width="1.4"/><path d="M1118 44.5 L1122.9 49.4 L1118 54.3 L1113.1 49.4 Z" stroke-linejoin="miter" stroke-width="1.4"/><path d="M1109.6 36.1 L1114.5 41 L1109.6 45.9 L1104.6999999999998 41 Z" stroke-linejoin="miter" stroke-width="1.4"/><path d="M1126.4 36.1 L1131.3000000000002 41 L1126.4 45.9 L1121.5 41 Z" stroke-linejoin="miter" stroke-width="1.4"/><circle cx="1181" cy="41" r="11.8" stroke-width="1.6"/><path d="M1181 29.2 A11.8 11.8 0 0 0 1181 52.8 A11.8 11.8 0 0 0 1181 29.2 Z" fill="none" stroke="none"/><path d="M1179.5 29.5 A11.8 11.8 0 0 0 1179.5 52.5 A 14 14 0 0 0 1179.5 29.5 Z" fill="#fff" stroke="none"/><rect x="1232.8" y="28.8" width="16.2" height="16.2" fill="#fff" stroke="none"/><rect x="1240.6" y="36.4" width="17.8" height="17.6" fill="#fff" stroke="#2c2c2c" stroke-width="1.6" stroke-linejoin="miter"/><path class="chev" d="M1268.6 38.3 l5.0 5.2 l5.0 -5.2"/></svg>
<div class="b" style="left:1855.00px;top:15.40px;width:77.50px;height:50.60px;background:#383838;border-radius:26px;"></div>
<div class="b" style="left:1860.40px;top:21.40px;width:38.40px;height:38.40px;background:#51ad69;border-radius:50%;"></div>
<span class="t" style="left:1873.20px;top:31px;font-size:19.4px;color:#fff;-webkit-text-stroke:0.3px #fff;">S</span>
<svg width="20" height="12" style="left:1909.6px;top:38px" fill="none"><path class="chev" d="M0.4 0.4 l5 5.2 l5 -5.2"/></svg>
<div class="b" style="left:1945.20px;top:15.50px;width:70.00px;height:50.50px;background:#4698f8;border-radius:9px;"></div>
<span class="t" style="left:1964.50px;top:32px;font-size:17.7px;color:#fff;font-weight:700;letter-spacing:-0.949px;">Shar</span>
</div>
</body></html>
